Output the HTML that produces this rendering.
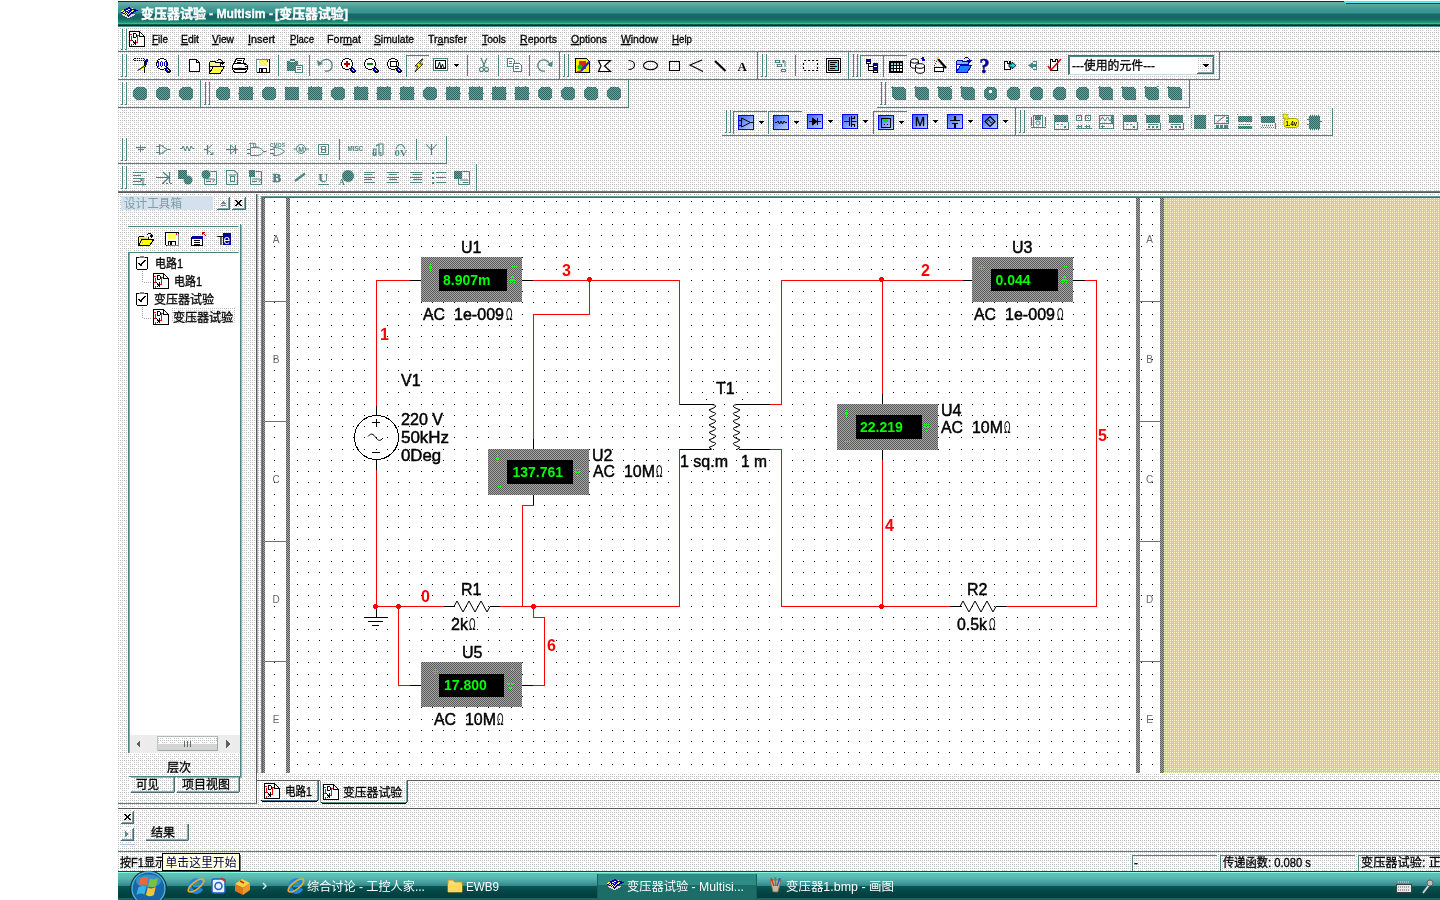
<!DOCTYPE html>
<html><head><meta charset="utf-8"><title>Multisim</title><style>html,body{margin:0;padding:0;background:#fff;overflow:hidden}svg{display:block;will-change:transform}</style></head><body><svg width="1440" height="900" viewBox="0 0 1440 900" shape-rendering="crispEdges" font-family="'Liberation Sans','Noto Sans CJK SC',sans-serif"><defs>
<pattern id="tb" width="8" height="8" patternUnits="userSpaceOnUse"><rect width="8" height="8" fill="#fff"/><path d="M0 0h1v1h-1zM2 0h1v1h-1zM4 0h1v1h-1zM6 0h1v1h-1zM0 2h1v1h-1zM2 2h1v1h-1zM6 2h1v1h-1zM0 4h1v1h-1zM2 4h1v1h-1zM4 4h1v1h-1zM6 4h1v1h-1zM2 6h1v1h-1zM4 6h1v1h-1zM6 6h1v1h-1z" fill="#c0c0c0"/></pattern>
<pattern id="ck" width="2" height="2" patternUnits="userSpaceOnUse"><rect width="2" height="2" fill="#a4a4a4"/><path d="M0 0h1v1h-1zM1 1h1v1h-1z" fill="#5c5c5c"/></pattern>
<pattern id="dots" x="297" y="201" width="45" height="45" patternUnits="userSpaceOnUse"><path d="M0 0h1v1h-1zM11 0h1v1h-1zM22 0h1v1h-1zM34 0h1v1h-1zM0 11h1v1h-1zM11 11h1v1h-1zM22 11h1v1h-1zM34 11h1v1h-1zM0 23h1v1h-1zM11 23h1v1h-1zM22 23h1v1h-1zM34 23h1v1h-1zM0 34h1v1h-1zM11 34h1v1h-1zM22 34h1v1h-1zM34 34h1v1h-1z" fill="#000"/></pattern>
<pattern id="gy" width="4" height="4" patternUnits="userSpaceOnUse"><rect width="4" height="4" fill="#c8c8c8"/><path d="M0 0h1v1h-1zM2 2h1v1h-1zM2 0h1v1h-1z" fill="#ffffc0"/><path d="M0 2h1v1h-1z" fill="#ffc8c8"/></pattern>
<pattern id="hz" width="2" height="2" patternUnits="userSpaceOnUse"><rect width="2" height="2" fill="#6aa09c"/><path d="M0 0h1v1h-1zM1 1h1v1h-1z" fill="#2a6a62"/></pattern>
<linearGradient id="ttl" x1="0" y1="0" x2="0" y2="1">
<stop offset="0" stop-color="#003828"/><stop offset="0.04" stop-color="#003828"/>
<stop offset="0.04" stop-color="#5aa8a0"/><stop offset="0.2" stop-color="#48a094"/>
<stop offset="0.36" stop-color="#3a9a90"/><stop offset="0.46" stop-color="#3a9494"/>
<stop offset="0.47" stop-color="#186c68"/><stop offset="0.8" stop-color="#187068"/>
<stop offset="0.84" stop-color="#1c8070"/><stop offset="0.85" stop-color="#30c090"/><stop offset="0.885" stop-color="#30c090"/>
<stop offset="0.886" stop-color="#085040"/><stop offset="0.96" stop-color="#003030"/><stop offset="0.961" stop-color="#4c8c94"/><stop offset="1" stop-color="#4c8c94"/>
</linearGradient>
<linearGradient id="tsk" x1="0" y1="0" x2="0" y2="1">
<stop offset="0" stop-color="#005040"/><stop offset="0.034" stop-color="#005040"/>
<stop offset="0.035" stop-color="#80ffe0"/><stop offset="0.069" stop-color="#80ffe0"/>
<stop offset="0.07" stop-color="#60c4b8"/><stop offset="0.24" stop-color="#58b8b0"/>
<stop offset="0.38" stop-color="#48a0a0"/><stop offset="0.5" stop-color="#348888"/>
<stop offset="0.51" stop-color="#085858"/><stop offset="0.68" stop-color="#044848"/>
<stop offset="0.93" stop-color="#033c3c"/><stop offset="0.94" stop-color="#106868"/><stop offset="1" stop-color="#106868"/>
</linearGradient>
<linearGradient id="bl" x1="0" y1="0" x2="1" y2="1"><stop offset="0" stop-color="#3060ff"/><stop offset="1" stop-color="#c8d8ff"/></linearGradient>
</defs>
<rect x="0" y="0" width="1440" height="900" fill="#fff"/>
<rect x="118" y="27" width="1322" height="845" fill="url(#tb)"/>
<rect x="118" y="1" width="1322" height="1" fill="#003828"/>
<rect x="118" y="2" width="1322" height="1" fill="#6cacaa"/>
<rect x="118" y="3" width="1322" height="1" fill="#68a8a6"/>
<rect x="118" y="4" width="1322" height="1" fill="#60a8a0"/>
<rect x="118" y="5" width="1322" height="1" fill="#54a49c"/>
<rect x="118" y="6" width="1322" height="1" fill="#4ca298"/>
<rect x="118" y="7" width="1322" height="1" fill="#44a094"/>
<rect x="118" y="8" width="1322" height="1" fill="#409c94"/>
<rect x="118" y="9" width="1322" height="1" fill="#3c9a92"/>
<rect x="118" y="10" width="1322" height="1" fill="#3a9894"/>
<rect x="118" y="11" width="1322" height="1" fill="#3a9696"/>
<rect x="118" y="12" width="1322" height="1" fill="#3a9494"/>
<rect x="118" y="13" width="1322" height="1" fill="#287c7a"/>
<rect x="118" y="14" width="1322" height="1" fill="#186c68"/>
<rect x="118" y="15" width="1322" height="1" fill="#176a66"/>
<rect x="118" y="16" width="1322" height="1" fill="#166866"/>
<rect x="118" y="17" width="1322" height="1" fill="#166866"/>
<rect x="118" y="18" width="1322" height="1" fill="#176a66"/>
<rect x="118" y="19" width="1322" height="1" fill="#187068"/>
<rect x="118" y="20" width="1322" height="1" fill="#1a7c6c"/>
<rect x="118" y="21" width="1322" height="1" fill="#1e8872"/>
<rect x="118" y="22" width="1322" height="1" fill="#249878"/>
<rect x="118" y="23" width="1322" height="1" fill="#30c090"/>
<rect x="118" y="24" width="1322" height="1" fill="#0c6048"/>
<rect x="118" y="25" width="1322" height="1" fill="#003030"/>
<rect x="118" y="26" width="1322" height="1" fill="#4c8c94"/>
<rect x="1344" y="1" width="96" height="1" fill="#70d0e8"/>
<rect x="1345" y="2" width="95" height="1" fill="#50f8ff"/>
<rect x="1346" y="3" width="94" height="1" fill="#003090"/>
<path d="M128 7h2v1h-2zM126 8h5v1h-5zM124 9h4v1h-4zM130 9h6v1h-6zM124 10h2v1h-2zM128 10h4v1h-4zM134 10h4v1h-4zM123 11h1v1h-1zM125 11h3v1h-3zM129 11h2v1h-2zM133 11h3v1h-3zM121 12h2v1h-2zM125 12h1v1h-1zM127 12h3v1h-3zM131 12h3v1h-3zM123 13h2v1h-2zM126 13h1v1h-1zM128 13h1v1h-1zM130 13h3v1h-3zM125 14h1v1h-1zM127 14h1v1h-1zM129 14h2v1h-2zM127 15h3v1h-3zM128 16h1v1h-1z" fill="#0000a0"/>
<path d="M132 8h1v1h-1zM128 9h2v1h-2zM126 10h2v1h-2zM128 11h1v1h-1zM126 12h1v1h-1zM130 12h1v1h-1zM125 13h1v1h-1zM127 13h1v1h-1zM129 13h1v1h-1zM126 14h1v1h-1zM128 14h1v1h-1z" fill="#fff"/>
<path d="M122 10h2v1h-2zM132 10h2v1h-2zM121 11h2v1h-2zM124 11h1v1h-1zM131 11h2v1h-2zM123 12h2v1h-2z" fill="#ffff00"/>
<path d="M122 14h3v1h-3zM131 14h4v1h-4zM123 15h4v1h-4zM130 15h4v1h-4zM125 16h3v1h-3zM129 16h3v1h-3zM127 17h3v1h-3z" fill="#e0d8d8"/>
<text x="141" y="18" font-size="13" fill="#fff" font-weight="bold" textLength="65" lengthAdjust="spacingAndGlyphs" stroke="#fff" stroke-width="0.4">变压器试验</text>
<text x="209" y="18" font-size="13" fill="#fff" font-weight="bold" textLength="64" lengthAdjust="spacingAndGlyphs" stroke="#fff" stroke-width="0.3">- Multisim -</text>
<text x="275" y="18" font-size="13" fill="#fff" font-weight="bold" textLength="73" lengthAdjust="spacingAndGlyphs" stroke="#fff" stroke-width="0.4">[变压器试验]</text>
<rect x="122" y="29" width="1" height="21" fill="#4a8582"/>
<rect x="126" y="29" width="1" height="21" fill="#4a8582"/>
<rect x="121" y="49" width="2" height="1" fill="#4a8582"/>
<rect x="125" y="49" width="2" height="1" fill="#4a8582"/>
<rect x="118" y="51" width="1322" height="1" fill="#4a8582"/>
<path d="M129 31h11v1h-11zM129 32h1v1h-1zM139 32h2v1h-2zM129 33h1v1h-1zM133 33h3v1h-3zM139 33h1v1h-1zM141 33h1v1h-1zM129 34h1v1h-1zM133 34h1v1h-1zM136 34h1v1h-1zM139 34h1v1h-1zM142 34h1v1h-1zM129 35h1v1h-1zM133 35h1v1h-1zM136 35h1v1h-1zM139 35h1v1h-1zM143 35h1v1h-1zM129 36h1v1h-1zM133 36h1v1h-1zM136 36h1v1h-1zM139 36h6v1h-6zM129 37h1v1h-1zM133 37h3v1h-3zM144 37h1v1h-1zM129 38h1v1h-1zM144 38h1v1h-1zM129 39h1v1h-1zM144 39h1v1h-1zM129 40h1v1h-1zM132 40h1v1h-1zM135 40h1v1h-1zM144 40h1v1h-1zM129 41h1v1h-1zM133 41h1v1h-1zM135 41h1v1h-1zM144 41h1v1h-1zM129 42h1v1h-1zM133 42h3v1h-3zM144 42h1v1h-1zM129 43h1v1h-1zM134 43h2v1h-2zM144 43h1v1h-1zM129 44h1v1h-1zM133 44h1v1h-1zM135 44h1v1h-1zM144 44h1v1h-1zM129 45h1v1h-1zM144 45h1v1h-1zM129 46h16v1h-16z" fill="#000"/>
<path d="M130 32h9v1h-9zM130 33h3v1h-3zM136 33h3v1h-3zM140 33h1v1h-1zM132 34h1v1h-1zM134 34h2v1h-2zM137 34h2v1h-2zM140 34h2v1h-2zM130 35h3v1h-3zM134 35h2v1h-2zM140 35h3v1h-3zM130 36h1v1h-1zM132 36h1v1h-1zM134 36h2v1h-2zM138 36h1v1h-1zM130 37h1v1h-1zM132 37h1v1h-1zM136 37h1v1h-1zM138 37h6v1h-6zM130 38h1v1h-1zM132 38h5v1h-5zM138 38h6v1h-6zM130 39h1v1h-1zM132 39h5v1h-5zM138 39h6v1h-6zM133 40h2v1h-2zM136 40h1v1h-1zM138 40h6v1h-6zM130 41h3v1h-3zM134 41h1v1h-1zM136 41h1v1h-1zM138 41h6v1h-6zM130 42h3v1h-3zM138 42h6v1h-6zM130 43h4v1h-4zM136 43h8v1h-8zM130 44h1v1h-1zM132 44h1v1h-1zM134 44h1v1h-1zM136 44h8v1h-8zM130 45h1v1h-1zM132 45h12v1h-12z" fill="#fff"/>
<path d="M130 34h2v1h-2zM137 35h2v1h-2zM131 36h1v1h-1zM137 36h1v1h-1zM131 37h1v1h-1zM137 37h1v1h-1zM131 38h1v1h-1zM137 38h1v1h-1zM131 39h1v1h-1zM137 39h1v1h-1zM130 40h2v1h-2zM137 40h1v1h-1zM137 41h1v1h-1zM136 42h2v1h-2zM131 44h1v1h-1zM131 45h1v1h-1z" fill="#ff0000"/>
<text x="152" y="43" font-size="11" fill="#000" textLength="16" lengthAdjust="spacingAndGlyphs" stroke="#000" stroke-width="0.3"><tspan text-decoration="underline">F</tspan>ile</text>
<text x="181" y="43" font-size="11" fill="#000" textLength="18" lengthAdjust="spacingAndGlyphs" stroke="#000" stroke-width="0.3"><tspan text-decoration="underline">E</tspan>dit</text>
<text x="212" y="43" font-size="11" fill="#000" textLength="22" lengthAdjust="spacingAndGlyphs" stroke="#000" stroke-width="0.3"><tspan text-decoration="underline">V</tspan>iew</text>
<text x="248" y="43" font-size="11" fill="#000" textLength="27" lengthAdjust="spacingAndGlyphs" stroke="#000" stroke-width="0.3"><tspan text-decoration="underline">I</tspan>nsert</text>
<text x="290" y="43" font-size="11" fill="#000" textLength="24" lengthAdjust="spacingAndGlyphs" stroke="#000" stroke-width="0.3"><tspan text-decoration="underline">P</tspan>lace</text>
<text x="327" y="43" font-size="11" fill="#000" textLength="34" lengthAdjust="spacingAndGlyphs" stroke="#000" stroke-width="0.3">For<tspan text-decoration="underline">m</tspan>at</text>
<text x="374" y="43" font-size="11" fill="#000" textLength="40" lengthAdjust="spacingAndGlyphs" stroke="#000" stroke-width="0.3"><tspan text-decoration="underline">S</tspan>imulate</text>
<text x="428" y="43" font-size="11" fill="#000" textLength="39" lengthAdjust="spacingAndGlyphs" stroke="#000" stroke-width="0.3">Tr<tspan text-decoration="underline">a</tspan>nsfer</text>
<text x="482" y="43" font-size="11" fill="#000" textLength="24" lengthAdjust="spacingAndGlyphs" stroke="#000" stroke-width="0.3"><tspan text-decoration="underline">T</tspan>ools</text>
<text x="520" y="43" font-size="11" fill="#000" textLength="37" lengthAdjust="spacingAndGlyphs" stroke="#000" stroke-width="0.3"><tspan text-decoration="underline">R</tspan>eports</text>
<text x="571" y="43" font-size="11" fill="#000" textLength="36" lengthAdjust="spacingAndGlyphs" stroke="#000" stroke-width="0.3"><tspan text-decoration="underline">O</tspan>ptions</text>
<text x="621" y="43" font-size="11" fill="#000" textLength="37" lengthAdjust="spacingAndGlyphs" stroke="#000" stroke-width="0.3"><tspan text-decoration="underline">W</tspan>indow</text>
<text x="672" y="43" font-size="11" fill="#000" textLength="20" lengthAdjust="spacingAndGlyphs" stroke="#000" stroke-width="0.3"><tspan text-decoration="underline">H</tspan>elp</text>
<rect x="118" y="79" width="1102" height="1" fill="#4a8582"/>
<rect x="118" y="107" width="511" height="1" fill="#4a8582"/>
<rect x="877" y="107" width="313" height="1" fill="#4a8582"/>
<rect x="722" y="135" width="611" height="1" fill="#4a8582"/>
<rect x="118" y="163" width="329" height="1" fill="#4a8582"/>
<rect x="118" y="191" width="1322" height="1" fill="#4a8582"/>
<rect x="118" y="192" width="1322" height="1" fill="#585858"/>
<rect x="122" y="54" width="1" height="23" fill="#4a8582"/>
<rect x="126" y="54" width="1" height="23" fill="#4a8582"/>
<rect x="121" y="76" width="2" height="1" fill="#4a8582"/>
<rect x="125" y="76" width="2" height="1" fill="#4a8582"/>
<rect x="559" y="52" width="1" height="27" fill="#4a8582"/>
<rect x="564" y="54" width="1" height="23" fill="#4a8582"/>
<rect x="568" y="54" width="1" height="23" fill="#4a8582"/>
<rect x="563" y="76" width="2" height="1" fill="#4a8582"/>
<rect x="567" y="76" width="2" height="1" fill="#4a8582"/>
<rect x="757" y="52" width="1" height="27" fill="#4a8582"/>
<rect x="762" y="54" width="1" height="23" fill="#4a8582"/>
<rect x="766" y="54" width="1" height="23" fill="#4a8582"/>
<rect x="761" y="76" width="2" height="1" fill="#4a8582"/>
<rect x="765" y="76" width="2" height="1" fill="#4a8582"/>
<rect x="848" y="52" width="1" height="27" fill="#4a8582"/>
<rect x="853" y="54" width="1" height="23" fill="#4a8582"/>
<rect x="857" y="54" width="1" height="23" fill="#4a8582"/>
<rect x="852" y="76" width="2" height="1" fill="#4a8582"/>
<rect x="856" y="76" width="2" height="1" fill="#4a8582"/>
<rect x="1219" y="52" width="1" height="28" fill="#4a8582"/>
<rect x="178" y="55" width="1" height="21" fill="#4a8582"/>
<rect x="278" y="55" width="1" height="21" fill="#4a8582"/>
<rect x="309" y="55" width="1" height="21" fill="#4a8582"/>
<rect x="467" y="55" width="1" height="21" fill="#4a8582"/>
<rect x="498" y="55" width="1" height="21" fill="#4a8582"/>
<rect x="529" y="55" width="1" height="21" fill="#4a8582"/>
<rect x="795" y="55" width="1" height="21" fill="#4a8582"/>
<rect x="122" y="82" width="1" height="23" fill="#4a8582"/>
<rect x="126" y="82" width="1" height="23" fill="#4a8582"/>
<rect x="121" y="104" width="2" height="1" fill="#4a8582"/>
<rect x="125" y="104" width="2" height="1" fill="#4a8582"/>
<rect x="200" y="80" width="1" height="27" fill="#4a8582"/>
<rect x="205" y="82" width="1" height="23" fill="#4a8582"/>
<rect x="209" y="82" width="1" height="23" fill="#4a8582"/>
<rect x="204" y="104" width="2" height="1" fill="#4a8582"/>
<rect x="208" y="104" width="2" height="1" fill="#4a8582"/>
<rect x="628" y="80" width="1" height="28" fill="#4a8582"/>
<rect x="881" y="82" width="1" height="23" fill="#4a8582"/>
<rect x="885" y="82" width="1" height="23" fill="#4a8582"/>
<rect x="880" y="104" width="2" height="1" fill="#4a8582"/>
<rect x="884" y="104" width="2" height="1" fill="#4a8582"/>
<rect x="1189" y="80" width="1" height="28" fill="#4a8582"/>
<rect x="726" y="110" width="1" height="23" fill="#4a8582"/>
<rect x="730" y="110" width="1" height="23" fill="#4a8582"/>
<rect x="725" y="132" width="2" height="1" fill="#4a8582"/>
<rect x="729" y="132" width="2" height="1" fill="#4a8582"/>
<rect x="1015" y="108" width="1" height="27" fill="#4a8582"/>
<rect x="1020" y="110" width="1" height="23" fill="#4a8582"/>
<rect x="1024" y="110" width="1" height="23" fill="#4a8582"/>
<rect x="1019" y="132" width="2" height="1" fill="#4a8582"/>
<rect x="1023" y="132" width="2" height="1" fill="#4a8582"/>
<rect x="1332" y="108" width="1" height="28" fill="#4a8582"/>
<rect x="122" y="138" width="1" height="23" fill="#4a8582"/>
<rect x="126" y="138" width="1" height="23" fill="#4a8582"/>
<rect x="121" y="160" width="2" height="1" fill="#4a8582"/>
<rect x="125" y="160" width="2" height="1" fill="#4a8582"/>
<rect x="446" y="136" width="1" height="28" fill="#4a8582"/>
<rect x="339" y="139" width="1" height="21" fill="#4a8582"/>
<rect x="416" y="139" width="1" height="21" fill="#4a8582"/>
<rect x="122" y="166" width="1" height="23" fill="#4a8582"/>
<rect x="126" y="166" width="1" height="23" fill="#4a8582"/>
<rect x="121" y="188" width="2" height="1" fill="#4a8582"/>
<rect x="125" y="188" width="2" height="1" fill="#4a8582"/>
<rect x="476" y="164" width="1" height="28" fill="#4a8582"/>
<rect x="406" y="55" width="23" height="1" fill="#4a8582"/>
<rect x="406" y="55" width="1" height="22" fill="#4a8582"/>
<rect x="860" y="55" width="23" height="1" fill="#4a8582"/>
<rect x="860" y="55" width="1" height="22" fill="#4a8582"/>
<rect x="883" y="55" width="24" height="1" fill="#4a8582"/>
<rect x="883" y="55" width="1" height="22" fill="#4a8582"/>
<rect x="733" y="111" width="34" height="1" fill="#4a8582"/>
<rect x="733" y="111" width="1" height="23" fill="#4a8582"/>
<rect x="768" y="111" width="34" height="1" fill="#4a8582"/>
<rect x="768" y="111" width="1" height="23" fill="#4a8582"/>
<rect x="873" y="111" width="34" height="1" fill="#4a8582"/>
<rect x="873" y="111" width="1" height="23" fill="#4a8582"/>
<path d="M136 87h8l3 3v7l-3 3h-8l-3 -3v-7z" fill="url(#hz)"/>
<path d="M159 87h8l3 3v7l-3 3h-8l-3 -3v-7z" fill="url(#hz)"/>
<path d="M182 87h8l3 3v7l-3 3h-8l-3 -3v-7z" fill="url(#hz)"/>
<path d="M219 87h8l3 3v7l-3 3h-8l-3 -3v-7z" fill="url(#hz)"/>
<path d="M239 87h14v13h-14z" fill="url(#hz)"/>
<path d="M238 93h1v1h-1zM253 93h1v1h-1zM242 86h1v1h-1zM249 86h1v1h-1z" fill="#4a8582"/>
<path d="M265 87h8l3 3v7l-3 3h-8l-3 -3v-7z" fill="url(#hz)"/>
<rect x="285" y="87" width="14" height="13" fill="url(#hz)"/>
<path d="M308 87h14v13h-14z" fill="url(#hz)"/>
<path d="M307 93h1v1h-1zM322 93h1v1h-1zM311 86h1v1h-1zM318 86h1v1h-1z" fill="#4a8582"/>
<path d="M334 87h8l3 3v7l-3 3h-8l-3 -3v-7z" fill="url(#hz)"/>
<path d="M354 87h14v13h-14z" fill="url(#hz)"/>
<path d="M353 93h1v1h-1zM368 93h1v1h-1zM357 86h1v1h-1zM364 86h1v1h-1z" fill="#4a8582"/>
<path d="M377 87h14v13h-14z" fill="url(#hz)"/>
<path d="M376 93h1v1h-1zM391 93h1v1h-1zM380 86h1v1h-1zM387 86h1v1h-1z" fill="#4a8582"/>
<path d="M400 87h14v13h-14z" fill="url(#hz)"/>
<path d="M399 93h1v1h-1zM414 93h1v1h-1zM403 86h1v1h-1zM410 86h1v1h-1z" fill="#4a8582"/>
<path d="M426 87h8l3 3v7l-3 3h-8l-3 -3v-7z" fill="url(#hz)"/>
<path d="M446 87h14v13h-14z" fill="url(#hz)"/>
<path d="M445 93h1v1h-1zM460 93h1v1h-1zM449 86h1v1h-1zM456 86h1v1h-1z" fill="#4a8582"/>
<path d="M469 87h14v13h-14z" fill="url(#hz)"/>
<path d="M468 93h1v1h-1zM483 93h1v1h-1zM472 86h1v1h-1zM479 86h1v1h-1z" fill="#4a8582"/>
<path d="M492 87h14v13h-14z" fill="url(#hz)"/>
<path d="M491 93h1v1h-1zM506 93h1v1h-1zM495 86h1v1h-1zM502 86h1v1h-1z" fill="#4a8582"/>
<path d="M515 87h14v13h-14z" fill="url(#hz)"/>
<path d="M514 93h1v1h-1zM529 93h1v1h-1zM518 86h1v1h-1zM525 86h1v1h-1z" fill="#4a8582"/>
<path d="M541 87h8l3 3v7l-3 3h-8l-3 -3v-7z" fill="url(#hz)"/>
<path d="M564 87h8l3 3v7l-3 3h-8l-3 -3v-7z" fill="url(#hz)"/>
<path d="M587 87h8l3 3v7l-3 3h-8l-3 -3v-7z" fill="url(#hz)"/>
<path d="M610 87h8l3 3v7l-3 3h-8l-3 -3v-7z" fill="url(#hz)"/>
<path d="M892 87h11l3 3v8l-2 2h-9l-3 -3z" fill="url(#hz)"/>
<path d="M891 86h2v2h-2z" fill="#4a8582"/>
<path d="M891 86h1v1h-1z" fill="#fff"/>
<path d="M904 99h2v1h-2zM905 98h1v1h-1z" fill="#4a8582"/>
<path d="M915 87h11l3 3v8l-2 2h-9l-3 -3z" fill="url(#hz)"/>
<path d="M914 86h2v2h-2z" fill="#4a8582"/>
<path d="M914 86h1v1h-1z" fill="#fff"/>
<path d="M927 99h2v1h-2zM928 98h1v1h-1z" fill="#4a8582"/>
<path d="M938 87h11l3 3v8l-2 2h-9l-3 -3z" fill="url(#hz)"/>
<path d="M937 86h2v2h-2z" fill="#4a8582"/>
<path d="M937 86h1v1h-1z" fill="#fff"/>
<path d="M950 86h2v1h-2z" fill="#4a8582"/>
<path d="M961 87h11l3 3v8l-2 2h-9l-3 -3z" fill="url(#hz)"/>
<path d="M960 86h2v2h-2z" fill="#4a8582"/>
<path d="M960 86h1v1h-1z" fill="#fff"/>
<path d="M973 99h2v1h-2zM974 98h1v1h-1z" fill="#4a8582"/>
<path d="M987 87h7l3 3v7l-3 3h-7l-3 -3v-7z" fill="url(#hz)"/>
<path d="M989 90h3v3h-3z" fill="#fff"/>
<path d="M1010 87h7l3 3v7l-3 3h-7l-3 -3v-7z" fill="url(#hz)"/>
<path d="M1033 87h7l3 3v7l-3 3h-7l-3 -3v-7z" fill="url(#hz)"/>
<path d="M1056 87h7l3 3v7l-3 3h-7l-3 -3v-7z" fill="url(#hz)"/>
<path d="M1079 87h7l3 3v7l-3 3h-7l-3 -3v-7z" fill="url(#hz)"/>
<path d="M1099 87h11l3 3v8l-2 2h-9l-3 -3z" fill="url(#hz)"/>
<path d="M1098 86h2v2h-2z" fill="#4a8582"/>
<path d="M1098 86h1v1h-1z" fill="#fff"/>
<path d="M1111 99h2v1h-2zM1112 98h1v1h-1z" fill="#4a8582"/>
<path d="M1122 87h11l3 3v8l-2 2h-9l-3 -3z" fill="url(#hz)"/>
<path d="M1121 86h2v2h-2z" fill="#4a8582"/>
<path d="M1121 86h1v1h-1z" fill="#fff"/>
<path d="M1134 99h2v1h-2zM1135 98h1v1h-1z" fill="#4a8582"/>
<path d="M1145 87h11l3 3v8l-2 2h-9l-3 -3z" fill="url(#hz)"/>
<path d="M1144 86h2v2h-2z" fill="#4a8582"/>
<path d="M1144 86h1v1h-1z" fill="#fff"/>
<path d="M1157 86h2v1h-2z" fill="#4a8582"/>
<path d="M1168 87h11l3 3v8l-2 2h-9l-3 -3z" fill="url(#hz)"/>
<path d="M1167 86h2v2h-2z" fill="#4a8582"/>
<path d="M1167 86h1v1h-1z" fill="#fff"/>
<path d="M1180 99h2v1h-2zM1181 98h1v1h-1z" fill="#4a8582"/>
<path d="M135 58h1v1h-1zM137 58h1v1h-1zM139 58h1v1h-1zM141 58h1v1h-1zM143 58h1v1h-1zM135 60h1v1h-1zM137 60h1v1h-1zM139 60h1v1h-1zM141 60h1v1h-1zM143 60h1v1h-1zM133 59h1v1h-1zM134 58h1v1h-1zM134 60h1v1h-1zM144 59h1v1h-1zM145 60h1v1h-1z" fill="#000"/>
<rect x="144" y="61" width="1" height="12" fill="#000"/>
<path d="M145 61h1v6h-1z" fill="#000"/>
<path d="M146 59l2 0l-1 6l-2 1z" fill="#0000c0"/>
<path d="M138 70l6 -5l1 2l-5 3.500z" fill="#e8e000"/>
<path d="M137.500 70.500l7 -4.500" fill="none" stroke="#000" stroke-width="1" shape-rendering="geometricPrecision"/>
<path d="M160 58h4v1h-4zM158 59h2v1h-2zM164 59h2v1h-2zM157 60h1v1h-1zM166 60h1v1h-1zM157 61h1v1h-1zM166 61h1v1h-1zM156 62h1v1h-1zM167 62h1v1h-1zM156 63h1v1h-1zM167 63h1v1h-1zM156 64h1v1h-1zM167 64h1v1h-1zM156 65h1v1h-1zM167 65h1v1h-1zM157 66h1v1h-1zM166 66h1v1h-1zM157 67h1v1h-1zM166 67h2v1h-2zM158 68h2v1h-2zM164 68h2v1h-2zM168 68h1v1h-1zM160 69h4v1h-4zM165 69h1v1h-1zM169 69h1v1h-1zM165 70h1v1h-1zM170 70h1v1h-1zM166 71h1v1h-1zM170 71h1v1h-1zM167 72h3v1h-3z" fill="#000"/>
<path d="M160 59h4v1h-4zM158 60h8v1h-8zM158 61h8v1h-8zM157 62h10v1h-10zM157 63h10v1h-10zM157 64h10v1h-10zM157 65h10v1h-10zM158 66h8v1h-8zM158 67h8v1h-8zM160 68h4v1h-4zM167 69h1v1h-1zM168 70h1v1h-1z" fill="#fff"/>
<path d="M166 68h2v1h-2zM166 69h1v1h-1zM168 69h1v1h-1zM166 70h2v1h-2zM169 70h1v1h-1zM167 71h3v1h-3z" fill="#0000c0"/>
<path d="M158 61h1v6h-1zM157 62h1v1h-1zM160 62h1v4h-1zM162 62h1v4h-1zM161 61h1v1h-1zM161 66h1v1h-1zM164 62h1v4h-1zM166 62h1v4h-1zM165 61h1v1h-1zM165 66h1v1h-1z" fill="#0000c0"/>
<path d="M189.500 59.500h7l3 3v9h-10z" fill="#fff" stroke="#000" stroke-width="1"/>
<path d="M196.500 59.500v3h3" fill="none" stroke="#000" stroke-width="1"/>
<path d="M209.5 62.5l2 -1.500h3l1.500 1.500h4v4h-10.500z" fill="#f8f880" stroke="#000" stroke-width="1"/>
<path d="M209.5 62.5v10.500h11l4 -6.500h-11l-4 6.500" fill="#ffff40" stroke="#000" stroke-width="1"/>
<path d="M217 60h1v1h-1zM218 59h3v1h-3zM221 60h1v1h-1zM222 61h1v2h-1zM220 62h5v1h-5zM221 63h3v1h-3zM222 64h1v1h-1z" fill="#000"/>
<path d="M236.500 58.500h8l-1.500 5h-9z" fill="#fff" stroke="#000" stroke-width="1"/>
<path d="M237 60h5v1h-5zM237 62h4v1h-4z" fill="#000"/>
<path d="M232.500 65.500l2 -2h11l2 2v4l-2 2.500h-11l-2 -2.500z" fill="#fff" stroke="#000" stroke-width="1"/>
<rect x="233" y="68" width="14" height="1" fill="#000"/>
<rect x="234" y="69" width="12" height="1" fill="#000"/>
<path d="M238 67h4v1h-4z" fill="#e8e000"/>
<path d="M244 64h2v1h-2zM245 66h2v1h-2z" fill="#000"/>
<path d="M256.5 59.5h13v13h-12l-1 -1z" fill="#fff" stroke="#5c8c8c" stroke-width="1"/>
<rect x="269" y="59" width="1" height="14" fill="#000"/>
<rect x="257" y="72" width="13" height="1" fill="#000"/>
<rect x="259" y="60" width="8" height="6" fill="#f8f060"/>
<path d="M260 61h1v1h-1zM261 62h1v1h-1zM262 63h1v1h-1zM263 64h1v1h-1zM263 60h1v1h-1zM264 61h1v1h-1zM265 62h1v1h-1zM266 63h1v1h-1zM259 63h1v1h-1zM260 64h1v1h-1z" fill="#fff"/>
<path d="M267 60h1v2h-1z" fill="#ff0000"/>
<path d="M259 68h8v1h-8zM259 68h1v4h-1zM266 68h1v4h-1zM261 69h2v3h-2z" fill="#000"/>
<path d="M287 61h3v-2h5v2h3v10h-11z" fill="url(#hz)"/>
<path d="M295 65h7v7h-7z" fill="#fff" stroke="#4a8582" stroke-width="1"/>
<path d="M297 67h4v1h-4zM297 69h4v1h-4z" fill="#4a8582"/>
<path d="M290 61h5v1h-5z" fill="#fff"/>
<path d="M320.500 63c3 -5 10 -5 11.500 1c1 5 -3 8 -7 7" fill="none" stroke="#4a8582" stroke-width="1.3" shape-rendering="geometricPrecision"/>
<path d="M317 60l1 6l5 -2z" fill="#4a8582" shape-rendering="geometricPrecision"/>
<path d="M345 58h4v1h-4zM343 59h2v1h-2zM349 59h2v1h-2zM342 60h1v1h-1zM351 60h1v1h-1zM342 61h1v1h-1zM351 61h1v1h-1zM341 62h1v1h-1zM352 62h1v1h-1zM341 63h1v1h-1zM352 63h1v1h-1zM341 64h1v1h-1zM352 64h1v1h-1zM341 65h1v1h-1zM352 65h1v1h-1zM342 66h1v1h-1zM351 66h1v1h-1zM342 67h1v1h-1zM351 67h2v1h-2zM343 68h2v1h-2zM349 68h2v1h-2zM353 68h1v1h-1zM345 69h4v1h-4zM350 69h1v1h-1zM354 69h1v1h-1zM350 70h1v1h-1zM355 70h1v1h-1zM351 71h1v1h-1zM355 71h1v1h-1zM352 72h3v1h-3z" fill="#000"/>
<path d="M345 59h4v1h-4zM343 60h8v1h-8zM343 61h8v1h-8zM342 62h10v1h-10zM342 63h10v1h-10zM342 64h10v1h-10zM342 65h10v1h-10zM343 66h8v1h-8zM343 67h8v1h-8zM345 68h4v1h-4zM352 69h1v1h-1zM353 70h1v1h-1z" fill="#fff"/>
<path d="M351 68h2v1h-2zM351 69h1v1h-1zM353 69h1v1h-1zM351 70h2v1h-2zM354 70h1v1h-1zM352 71h3v1h-3z" fill="#0000c0"/>
<path d="M346 61h2v6h-2zM344 63h6v2h-6z" fill="#a00000"/>
<path d="M368 58h4v1h-4zM366 59h2v1h-2zM372 59h2v1h-2zM365 60h1v1h-1zM374 60h1v1h-1zM365 61h1v1h-1zM374 61h1v1h-1zM364 62h1v1h-1zM375 62h1v1h-1zM364 63h1v1h-1zM375 63h1v1h-1zM364 64h1v1h-1zM375 64h1v1h-1zM364 65h1v1h-1zM375 65h1v1h-1zM365 66h1v1h-1zM374 66h1v1h-1zM365 67h1v1h-1zM374 67h2v1h-2zM366 68h2v1h-2zM372 68h2v1h-2zM376 68h1v1h-1zM368 69h4v1h-4zM373 69h1v1h-1zM377 69h1v1h-1zM373 70h1v1h-1zM378 70h1v1h-1zM374 71h1v1h-1zM378 71h1v1h-1zM375 72h3v1h-3z" fill="#000"/>
<path d="M368 59h4v1h-4zM366 60h8v1h-8zM366 61h8v1h-8zM365 62h10v1h-10zM365 63h10v1h-10zM365 64h10v1h-10zM365 65h10v1h-10zM366 66h8v1h-8zM366 67h8v1h-8zM368 68h4v1h-4zM375 69h1v1h-1zM376 70h1v1h-1z" fill="#fff"/>
<path d="M374 68h2v1h-2zM374 69h1v1h-1zM376 69h1v1h-1zM374 70h2v1h-2zM377 70h1v1h-1zM375 71h3v1h-3z" fill="#0000c0"/>
<path d="M367 63h6v2h-6z" fill="#008000"/>
<path d="M391 58h4v1h-4zM389 59h2v1h-2zM395 59h2v1h-2zM388 60h1v1h-1zM397 60h1v1h-1zM388 61h1v1h-1zM397 61h1v1h-1zM387 62h1v1h-1zM398 62h1v1h-1zM387 63h1v1h-1zM398 63h1v1h-1zM387 64h1v1h-1zM398 64h1v1h-1zM387 65h1v1h-1zM398 65h1v1h-1zM388 66h1v1h-1zM397 66h1v1h-1zM388 67h1v1h-1zM397 67h2v1h-2zM389 68h2v1h-2zM395 68h2v1h-2zM399 68h1v1h-1zM391 69h4v1h-4zM396 69h1v1h-1zM400 69h1v1h-1zM396 70h1v1h-1zM401 70h1v1h-1zM397 71h1v1h-1zM401 71h1v1h-1zM398 72h3v1h-3z" fill="#000"/>
<path d="M391 59h4v1h-4zM389 60h8v1h-8zM389 61h8v1h-8zM388 62h10v1h-10zM388 63h10v1h-10zM388 64h10v1h-10zM388 65h10v1h-10zM389 66h8v1h-8zM389 67h8v1h-8zM391 68h4v1h-4zM398 69h1v1h-1zM399 70h1v1h-1z" fill="#fff"/>
<path d="M397 68h2v1h-2zM397 69h1v1h-1zM399 69h1v1h-1zM397 70h2v1h-2zM400 70h1v1h-1zM398 71h3v1h-3z" fill="#0000c0"/>
<path d="M390.500 61.500h6v5h-6z" fill="none" stroke="#000" stroke-width="1.2"/>
<path d="M422 59l-7 7h3l-3 6l8 -8h-3.500l3.500 -5z" fill="#f8f000" stroke="#000" stroke-width="0.8" shape-rendering="geometricPrecision"/>
<path d="M433.500 58.500h14v12h-14z" fill="#fff" stroke="#4a8582" stroke-width="1"/>
<path d="M435.500 60.500h10v8h-10z" fill="none" stroke="#000" stroke-width="1"/>
<path d="M436 68l2 -1l1.500 -5l1.500 6l1.500 -4l1 3.500l1.500 .5" fill="none" stroke="#000" stroke-width="1" shape-rendering="geometricPrecision"/>
<path d="M454 64h5v1h-5zM455 65h3v1h-3zM456 66h1v1h-1z" fill="#000"/>
<path d="M481 58l4 9M487 58l-4 9" fill="none" stroke="#4a8582" stroke-width="1.2" shape-rendering="geometricPrecision"/>
<circle cx="481.5" cy="69.5" r="2" fill="none" stroke="#4a8582" stroke-width="1.100" shape-rendering="geometricPrecision"/><circle cx="486.500" cy="69.500" r="2" fill="none" stroke="#4a8582" stroke-width="1.100" shape-rendering="geometricPrecision"/>
<path d="M507.500 58.500h5l2 2v6h-7z" fill="#fff" stroke="#4a8582" stroke-width="1"/>
<path d="M513.500 63.500h6l2 2v6h-8z" fill="#fff" stroke="#4a8582" stroke-width="1"/>
<path d="M509 61h3v1h-3zM509 63h3v1h-3zM515 66h4v1h-4zM515 68h4v1h-4z" fill="#4a8582"/>
<path d="M549.500 64c-3 -6 -10 -5 -11.500 0c-1 5 3 8 7 7" fill="none" stroke="#4a8582" stroke-width="1.3" shape-rendering="geometricPrecision"/>
<path d="M553 61l-1 6l-5 -2z" fill="#4a8582" shape-rendering="geometricPrecision"/>
<path d="M575.500 58.500h11l3 3v11h-14z" fill="#f8f000" stroke="#000" stroke-width="1"/>
<rect x="579" y="61" width="7" height="8" fill="#e02020"/>
<circle cx="580" cy="67" r="2.500" fill="#00c000" shape-rendering="geometricPrecision"/>
<path d="M581 71l8 -9" fill="none" stroke="#2020e0" stroke-width="2" shape-rendering="geometricPrecision"/>
<path d="M577 72l4 -1" fill="none" stroke="#e02020" stroke-width="1.5" shape-rendering="geometricPrecision"/>
<path d="M598.500 60.500h12l-6 5.500l6 5.500h-12l2.500 -5.500z" fill="#fff" stroke="#000" stroke-width="1.2" shape-rendering="geometricPrecision"/>
<path d="M628.500 60.500c8 0 8 9 0 9" fill="none" stroke="#000" stroke-width="1.1" shape-rendering="geometricPrecision"/>
<ellipse cx="650.500" cy="65.500" rx="7" ry="4.200" fill="none" stroke="#000" stroke-width="1.100" shape-rendering="geometricPrecision"/>
<path d="M669.500 61.500h10v9h-10z" fill="none" stroke="#000" stroke-width="1"/>
<path d="M702 60l-12 5l13 6.500" fill="none" stroke="#000" stroke-width="1.1" shape-rendering="geometricPrecision"/>
<path d="M715 61l10.500 10" fill="none" stroke="#000" stroke-width="2" shape-rendering="geometricPrecision"/>
<text x="737.5" y="71" font-size="13" fill="#000" font-weight="bold" font-family="'Liberation Serif',serif">A</text>
<path d="M775.500 60.500h4v2h-4zM777.500 64.500h4v2h-4zM781.500 69.500h4v2h-4z" fill="#fff" stroke="#4a8582" stroke-width="1"/>
<path d="M782 61h3v6" fill="none" stroke="#4a8582" stroke-width="1" shape-rendering="geometricPrecision"/>
<path d="M783 60h1v3h-1z" fill="#4a8582"/>
<rect x="795" y="55" width="1" height="21" fill="#4a8582"/>
<path d="M803.500 60.500h14v10h-14z" fill="none" stroke="#000" stroke-width="1.4" stroke-dasharray="2 2"/>
<path d="M826.500 58.500h14v14h-14z" fill="#fff" stroke="#000" stroke-width="1"/>
<path d="M828.500 60.500h10v10h-10z" fill="#40e0e0" stroke="#000" stroke-width="1"/>
<path d="M830 62h7v1h-7zM830 64h5v1h-5zM830 66h7v1h-7zM830 68h5v1h-5z" fill="#000"/>
<rect x="866" y="59" width="5" height="2" fill="#0000a0"/>
<path d="M866.5 61.5h4v2h-4z" fill="#fff" stroke="#000" stroke-width="1"/>
<rect x="873" y="63" width="5" height="2" fill="#0000a0"/>
<path d="M873.5 65.5h4v2h-4z" fill="#fff" stroke="#000" stroke-width="1"/>
<rect x="873" y="68" width="5" height="2" fill="#0000a0"/>
<path d="M873.5 70.5h4v2h-4z" fill="#fff" stroke="#000" stroke-width="1"/>
<path d="M868 64h1v7h-1zM868 66h5v1h-5zM868 70h5v1h-5z" fill="#000"/>
<rect x="889" y="61" width="14" height="12" fill="#000"/>
<rect x="891" y="63" width="2" height="2" fill="#90d0e0"/>
<rect x="891" y="66" width="2" height="2" fill="#90d0e0"/>
<rect x="891" y="69" width="2" height="2" fill="#90d0e0"/>
<rect x="894" y="63" width="2" height="2" fill="#90d0e0"/>
<rect x="894" y="66" width="2" height="2" fill="#fff"/>
<rect x="894" y="69" width="2" height="2" fill="#fff"/>
<rect x="897" y="63" width="2" height="2" fill="#90d0e0"/>
<rect x="897" y="66" width="2" height="2" fill="#fff"/>
<rect x="897" y="69" width="2" height="2" fill="#fff"/>
<rect x="900" y="63" width="2" height="2" fill="#90d0e0"/>
<rect x="900" y="66" width="2" height="2" fill="#fff"/>
<rect x="900" y="69" width="2" height="2" fill="#fff"/>
<g shape-rendering="geometricPrecision" fill="#fff" stroke="#000" stroke-width="1"><path d="M910.500 61v5c0 3 8 3 8 0v-5"/><ellipse cx="914.500" cy="61" rx="4" ry="2.200"/><path d="M915.500 66v5c0 3 9 3 9 0v-5"/><ellipse cx="920" cy="66" rx="4.500" ry="2.300"/></g>
<path d="M921 58l3 -1.500v5z" fill="#0000c0"/>
<path d="M922 59h3v2h-3z" fill="#0000c0"/>
<path d="M938 59l8 9" fill="none" stroke="#000" stroke-width="2.2" shape-rendering="geometricPrecision"/>
<path d="M934.500 67.500h9v4h-9z" fill="#fff" stroke="#000" stroke-width="1"/>
<path d="M934 60h1v1h-1zM935 63h1v1h-1zM936 61h1v1h-1zM934 65h1v1h-1zM937 58h1v1h-1z" fill="#c00000"/>
<path d="M937 57h2v2h-2z" fill="#e8e000"/>
<path d="M956.500 61.500l2 -1.500h3l1.500 1.500h5v3h-11.500z" fill="#80b0ff" stroke="#0000c0" stroke-width="1"/>
<path d="M956.500 61.500v10.500h11l4 -6.500h-11l-4 6.500" fill="#2080ff" stroke="#0000c0" stroke-width="1"/>
<path d="M964 58h1v1h-1zM965 57h3v1h-3zM968 58h1v1h-1zM969 59h1v2h-1zM967 60h5v1h-5zM968 61h3v1h-3zM969 62h1v1h-1z" fill="#0000a0"/>
<text x="979.5" y="72.5" font-size="20" fill="#000090" font-weight="bold" font-family="'Liberation Serif',serif" stroke="#000090" stroke-width="0.5">?</text>
<path d="M1004.500 61.500h3v2h2v-2h1v8h-6z" fill="#fff" stroke="#000" stroke-width="1"/>
<path d="M1009 64h3v-2l4 3.500l-4 3.500v-2h-3z" fill="#20d0e0" stroke="#000" stroke-width="0.8" shape-rendering="geometricPrecision"/>
<path d="M1036 64h-3v-2l-5 3.500l5 3.500v-2h3z" fill="#4a8582" shape-rendering="geometricPrecision"/>
<path d="M1032.500 61.500h4v8h-4" fill="none" stroke="#4a8582" stroke-width="1"/>
<path d="M1050.500 59.500h2v2h3v-2h2v11h-7z" fill="#fff" stroke="#000" stroke-width="1"/>
<path d="M1048 66l3 4l10 -11" fill="none" stroke="#e00000" stroke-width="1.6" shape-rendering="geometricPrecision"/>
<rect x="1068" y="55" width="146" height="20" fill="#fff"/>
<rect x="1068" y="55" width="146" height="1" fill="#4a6c6c"/>
<rect x="1068" y="55" width="1" height="20" fill="#4a6c6c"/>
<rect x="1069" y="56" width="145" height="1" fill="#4a8582"/>
<rect x="1069" y="56" width="1" height="18" fill="#4a8582"/>
<rect x="1069" y="74" width="146" height="1" fill="#d0d8d8"/>
<rect x="1214" y="55" width="1" height="20" fill="#d0d8d8"/>
<rect x="1197" y="57" width="16" height="16" fill="url(#tb)"/>
<rect x="1197" y="57" width="17" height="1" fill="#fff"/>
<rect x="1197" y="57" width="1" height="17" fill="#fff"/>
<rect x="1197" y="73" width="17" height="1" fill="#4a6c6c"/>
<rect x="1213" y="57" width="1" height="17" fill="#4a6c6c"/>
<rect x="1198" y="72" width="15" height="1" fill="#7aa4a4"/>
<rect x="1212" y="58" width="1" height="15" fill="#7aa4a4"/>
<path d="M1202 64h7l-3.500 3.500z" fill="#000"/>
<text x="1072" y="69.5" font-size="12" fill="#000" textLength="83" lengthAdjust="spacingAndGlyphs" stroke="#000" stroke-width="0.3">---使用的元件---</text>
<rect x="136" y="147" width="10" height="1" fill="#4a8582"/>
<rect x="138" y="149" width="6" height="1" fill="#4a8582"/>
<rect x="140" y="145" width="1" height="7" fill="#4a8582"/>
<path d="M159.500 144.500v10l8 -5zM156 146.500h3.500M156 152.500h3.500M167.500 149.500h3M163 145v2M163 152v2" fill="none" stroke="#4a8582" stroke-width="1" shape-rendering="geometricPrecision"/>
<path d="M180 148.500h2l1.200 -2.500l2 5l2 -5l2 5l2 -5l1.200 2.500h2" fill="none" stroke="#4a8582" stroke-width="1" shape-rendering="geometricPrecision"/>
<path d="M204 149.500h3.500M207.500 145v9.500M207.500 149l5 -4.500M207.500 150l5.500 4.500M210 154.500h3v-2.500" fill="none" stroke="#4a8582" stroke-width="1" shape-rendering="geometricPrecision"/>
<path d="M226 149.500h12M230.500 145v9l5 -4.500zM235.500 145v9" fill="none" stroke="#4a8582" stroke-width="1" shape-rendering="geometricPrecision"/>
<path d="M250.500 147.500h6c4 0 6 2 7 4c-1 2 -3 4 -7 4h-6zM247 149.500h3.500M247 153.500h3.500M263.500 151.500h3" fill="none" stroke="#4a8582" stroke-width="1" shape-rendering="geometricPrecision"/>
<text x="249" y="146.5" font-size="6" fill="#4a8582" font-weight="bold" textLength="9" lengthAdjust="spacingAndGlyphs">TTL</text>
<path d="M273.500 147.500c1.500 2 1.500 6 0 8c5 0 8 -1 11 -4c-3 -3 -6 -4 -11 -4zM270 149.500h4M270 153.500h4" fill="none" stroke="#4a8582" stroke-width="1" shape-rendering="geometricPrecision"/>
<text x="270" y="146.5" font-size="6" fill="#4a8582" font-weight="bold" textLength="15" lengthAdjust="spacingAndGlyphs">CMOS</text>
<circle cx="301" cy="149" r="4.500" fill="none" stroke="#4a8582" stroke-width="1" shape-rendering="geometricPrecision"/>
<path d="M293.500 149h3M305.500 149h3.500" fill="none" stroke="#4a8582" stroke-width="1" shape-rendering="geometricPrecision"/>
<text x="298.3" y="152" font-size="7" fill="#4a8582" font-weight="bold">M</text>
<path d="M318.500 144.500h10v10h-10zM321.500 146.500h4v6h-4zM321.500 149.500h4" fill="none" stroke="#4a8582" stroke-width="1" shape-rendering="geometricPrecision"/>
<text x="347.5" y="151" font-size="7" fill="#4a8582" font-weight="bold" textLength="15.5" lengthAdjust="spacingAndGlyphs">MISC</text>
<path d="M373.500 155v-6h2.500v6zM379 155v-11h4v11M376 146l3 -2" fill="none" stroke="#4a8582" stroke-width="1.1" shape-rendering="geometricPrecision"/>
<text x="372" y="156" font-size="6" fill="#4a8582" font-weight="bold" textLength="11" lengthAdjust="spacingAndGlyphs">0 1</text>
<path d="M396 149c2 -6 7 -6 9 0" fill="none" stroke="#4a8582" stroke-width="1.1" shape-rendering="geometricPrecision"/>
<text x="394.5" y="156" font-size="8.5" fill="#4a8582" font-weight="bold" textLength="13" lengthAdjust="spacingAndGlyphs" font-family="'Liberation Serif',serif">0V</text>
<path d="M431.500 155v-11M426 144l5.500 6l5.500 -6" fill="none" stroke="#4a8582" stroke-width="1.1" shape-rendering="geometricPrecision"/>
<rect x="133" y="172" width="14" height="1" fill="#4a8582"/>
<rect x="133" y="175" width="8" height="1" fill="#4a8582"/>
<rect x="133" y="178" width="8" height="1" fill="#4a8582"/>
<rect x="133" y="181" width="8" height="1" fill="#4a8582"/>
<rect x="133" y="184" width="13" height="1" fill="#4a8582"/>
<text x="140" y="184" font-size="9" fill="#4a8582" font-weight="bold">¶</text>
<path d="M156 177.500h13M163 172l6 5.500l-6 5.500M169.500 172v11" fill="none" stroke="#4a8582" stroke-width="1.2" shape-rendering="geometricPrecision"/>
<path d="M162 183h2v1h-2zM166 183h2v1h-2zM170 183h2v1h-2z" fill="#4a8582"/>
<rect x="178" y="170" width="9" height="9" fill="url(#hz)"/>
<circle cx="188" cy="180" r="4.500" fill="url(#hz)" shape-rendering="geometricPrecision"/>
<circle cx="206" cy="174.500" r="4.500" fill="url(#hz)" shape-rendering="geometricPrecision"/>
<path d="M204.500 176.500v8h12v-13h-6" fill="none" stroke="#4a8582" stroke-width="1" shape-rendering="geometricPrecision"/>
<path d="M206 179h8M206 181.500h5M213 182l2 -3" fill="none" stroke="#4a8582" stroke-width="1" shape-rendering="geometricPrecision"/>
<path d="M226.500 170.500h8l3 3v11h-11zM230.500 176.500h4v5h-4zM229 175h7" fill="none" stroke="#4a8582" stroke-width="1.1" shape-rendering="geometricPrecision"/>
<rect x="249" y="170" width="6" height="7" fill="url(#hz)"/>
<path d="M250.500 177v7.500h11v-13h-6M252 179h8M252 181.500h5M259 182l2 -3" fill="none" stroke="#4a8582" stroke-width="1" shape-rendering="geometricPrecision"/>
<text x="272.5" y="182" font-size="13" fill="#4a8582" font-weight="bold" font-family="'Liberation Serif',serif" stroke="#4a8582" stroke-width="0.5">B</text>
<path d="M295 181l10 -7.500" fill="none" stroke="#4a8582" stroke-width="2.2" shape-rendering="geometricPrecision"/>
<text x="318" y="182" font-size="13" fill="#4a8582" font-weight="bold" textLength="10.5" lengthAdjust="spacingAndGlyphs" font-family="'Liberation Serif',serif">U</text>
<rect x="318" y="184" width="11" height="1" fill="#4a8582"/>
<circle cx="348" cy="176" r="6" fill="url(#hz)" shape-rendering="geometricPrecision"/>
<text x="339" y="185" font-size="8" fill="#4a8582" font-weight="bold" font-family="'Liberation Serif',serif">A</text>
<rect x="364" y="172" width="11" height="1" fill="#4a8582"/>
<rect x="364" y="174" width="8" height="1" fill="#4a8582"/>
<rect x="364" y="177" width="11" height="1" fill="#4a8582"/>
<rect x="364" y="179" width="8" height="1" fill="#4a8582"/>
<rect x="364" y="182" width="11" height="1" fill="#4a8582"/>
<rect x="387" y="172" width="12" height="1" fill="#4a8582"/>
<rect x="389" y="174" width="8" height="1" fill="#4a8582"/>
<rect x="387" y="177" width="12" height="1" fill="#4a8582"/>
<rect x="389" y="179" width="8" height="1" fill="#4a8582"/>
<rect x="387" y="182" width="12" height="1" fill="#4a8582"/>
<rect x="410" y="172" width="12" height="1" fill="#4a8582"/>
<rect x="413" y="174" width="9" height="1" fill="#4a8582"/>
<rect x="410" y="177" width="12" height="1" fill="#4a8582"/>
<rect x="413" y="179" width="9" height="1" fill="#4a8582"/>
<rect x="410" y="182" width="12" height="1" fill="#4a8582"/>
<path d="M432 172h2v2h-2z" fill="#4a8582"/>
<rect x="436" y="172" width="10" height="1" fill="#4a8582"/>
<path d="M432 177h2v2h-2z" fill="#4a8582"/>
<rect x="436" y="177" width="10" height="1" fill="#4a8582"/>
<path d="M432 182h2v2h-2z" fill="#4a8582"/>
<rect x="436" y="182" width="10" height="1" fill="#4a8582"/>
<rect x="454" y="171" width="8" height="8" fill="url(#hz)"/>
<path d="M458.500 179v5.500h11v-13h-7M460 180h8M463 182.500h5" fill="none" stroke="#4a8582" stroke-width="1" shape-rendering="geometricPrecision"/>
<rect x="738" y="115" width="16" height="15" fill="url(#bl)"/>
<path d="M738.5 115.5h15v14h-15z" fill="none" stroke="#0000ff" stroke-width="1"/>
<path d="M759 121h5v1h-5zM760 122h3v1h-3zM761 123h1v1h-1z" fill="#000"/>
<path d="M741.500 118v9l9 -4.500zM739 120.500h2.500M739 125.500h2.500M750.500 122.500h3" fill="none" stroke="#000" stroke-width="1" shape-rendering="geometricPrecision"/>
<rect x="773" y="115" width="16" height="15" fill="url(#bl)"/>
<path d="M773.5 115.5h15v14h-15z" fill="none" stroke="#0000ff" stroke-width="1"/>
<path d="M794 121h5v1h-5zM795 122h3v1h-3zM796 123h1v1h-1z" fill="#000"/>
<path d="M775 122.500h2l1 -1.500l1.500 3l1.500 -3l1.500 3l1.500 -3l1 1.500h2" fill="none" stroke="#000" stroke-width="1" shape-rendering="geometricPrecision"/>
<rect x="807" y="114" width="16" height="15" fill="url(#bl)"/>
<path d="M807.5 114.5h15v14h-15z" fill="none" stroke="#0000ff" stroke-width="1"/>
<path d="M828 120h5v1h-5zM829 121h3v1h-3zM830 122h1v1h-1z" fill="#000"/>
<path d="M809 121.500h12M812.500 118v7l4.500 -3.500zM817.500 118v7" fill="#000" stroke="#000" stroke-width="1" shape-rendering="geometricPrecision"/>
<rect x="842" y="114" width="16" height="15" fill="url(#bl)"/>
<path d="M842.5 114.5h15v14h-15z" fill="none" stroke="#0000ff" stroke-width="1"/>
<path d="M863 120h5v1h-5zM864 121h3v1h-3zM865 122h1v1h-1z" fill="#000"/>
<path d="M844 121.500h5M849.500 117v9M851.500 116v11M851.500 118.500h3v-2.500M851.500 124.500h3v2.500M851.500 121.500h5" fill="none" stroke="#000" stroke-width="1.1" shape-rendering="geometricPrecision"/>
<rect x="878" y="115" width="16" height="15" fill="url(#bl)"/>
<path d="M878.5 115.5h15v14h-15z" fill="none" stroke="#0000ff" stroke-width="1"/>
<path d="M899 121h5v1h-5zM900 122h3v1h-3zM901 123h1v1h-1z" fill="#000"/>
<path d="M881.500 118.500h9v9h-9z" fill="none" stroke="#000" stroke-width="1.3"/>
<path d="M884 120h4v2h-4z" fill="#00e000"/>
<path d="M884 124h1v1h-1zM887 124h1v1h-1z" fill="#000"/>
<rect x="912" y="114" width="16" height="15" fill="url(#bl)"/>
<path d="M912.5 114.5h15v14h-15z" fill="none" stroke="#0000ff" stroke-width="1"/>
<path d="M933 120h5v1h-5zM934 121h3v1h-3zM935 122h1v1h-1z" fill="#000"/>
<text x="915" y="126" font-size="12" fill="#000" stroke="#000" stroke-width="0.3">M</text>
<rect x="947" y="114" width="16" height="15" fill="url(#bl)"/>
<path d="M947.5 114.5h15v14h-15z" fill="none" stroke="#0000ff" stroke-width="1"/>
<path d="M968 120h5v1h-5zM969 121h3v1h-3zM970 122h1v1h-1z" fill="#000"/>
<path d="M955 116v4M950 120.500h10M952 123.500h6M955 124v4" fill="none" stroke="#000" stroke-width="1.2"/>
<rect x="982" y="114" width="16" height="15" fill="url(#bl)"/>
<path d="M982.5 114.5h15v14h-15z" fill="none" stroke="#0000ff" stroke-width="1"/>
<path d="M1003 120h5v1h-5zM1004 121h3v1h-3zM1005 122h1v1h-1z" fill="#000"/>
<path d="M990 116.500l5 5l-5 5l-5 -5z" fill="none" stroke="#000" stroke-width="1.2" shape-rendering="geometricPrecision"/>
<path d="M987.500 121.500c1 -2 2 -2 2.500 0s1.500 2 2.500 0" fill="none" stroke="#000" stroke-width="1" shape-rendering="geometricPrecision"/>
<path d="M1033.5 115.5h9v12h-9z" fill="none" stroke="#4a8582" stroke-width="1"/>
<rect x="1035" y="116" width="6" height="4" fill="url(#hz)"/>
<circle cx="1038" cy="123" r="2" fill="none" stroke="#4a8582" shape-rendering="geometricPrecision"/>
<rect x="1031" y="117" width="1" height="9" fill="#4a8582"/>
<rect x="1045" y="117" width="1" height="9" fill="#4a8582"/>
<rect x="1031" y="127" width="15" height="1" fill="#4a8582"/>
<rect x="1054" y="115" width="14" height="7" fill="url(#hz)"/>
<path d="M1054.5 122v7.500h14v-7.500" fill="none" stroke="#4a8582" stroke-width="1"/>
<path d="M1057 124h2v1h-2zM1061 124h2v1h-2zM1064 126h2v2h-2z" fill="#4a8582"/>
<path d="M1053 114h1v1h-1z" fill="#4a8582"/>
<path d="M1076.5 115.5h5v5h-5zM1085.5 115.5h5v5h-5z" fill="none" stroke="#4a8582" stroke-width="1"/>
<path d="M1078 118h1v1h-1zM1079 117h1v1h-1zM1087 117h1v1h-1zM1088 118h1v1h-1z" fill="#4a8582"/>
<rect x="1076" y="128" width="16" height="1" fill="#4a8582"/>
<path d="M1078 125h1v3h-1zM1081 125h1v3h-1zM1086 125h1v3h-1zM1089 125h1v3h-1zM1077 126h5v1h-5zM1085 126h5v1h-5z" fill="#4a8582"/>
<path d="M1099.5 115.5h14v13h-14zM1099.5 123.5h14" fill="none" stroke="#4a8582" stroke-width="1"/>
<path d="M1100 121l2.500 -4l2.500 4l2.500 -4l2.500 4l2 -3" fill="none" stroke="#4a8582" stroke-width="1" shape-rendering="geometricPrecision"/>
<path d="M1101 126h4v1h-4zM1102 125h1v3h-1z" fill="#4a8582"/>
<path d="M1111 116h2v7h-2z" fill="url(#hz)"/>
<rect x="1123" y="115" width="14" height="7" fill="url(#hz)"/>
<path d="M1123.5 122v7.500h14v-7.500" fill="none" stroke="#4a8582" stroke-width="1"/>
<path d="M1126 124h2v1h-2zM1130 124h2v1h-2zM1133 126h2v2h-2z" fill="#4a8582"/>
<path d="M1122 114h1v1h-1z" fill="#4a8582"/>
<rect x="1146" y="115" width="14" height="8" fill="url(#hz)"/>
<rect x="1146" y="129" width="15" height="1" fill="#4a8582"/>
<rect x="1160" y="123" width="1" height="7" fill="#4a8582"/>
<path d="M1148 126h2v2h-2zM1152 126h2v2h-2zM1156 126h2v2h-2zM1148 124h10v1h-10z" fill="#4a8582"/>
<path d="M1145 114h1v1h-1z" fill="#4a8582"/>
<rect x="1169" y="115" width="14" height="8" fill="url(#hz)"/>
<rect x="1169" y="129" width="15" height="1" fill="#4a8582"/>
<rect x="1183" y="123" width="1" height="7" fill="#4a8582"/>
<path d="M1171 126h2v2h-2zM1175 126h2v2h-2zM1179 126h2v2h-2zM1171 124h10v1h-10z" fill="#4a8582"/>
<path d="M1168 114h1v1h-1z" fill="#4a8582"/>
<rect x="1194" y="115" width="12" height="14" fill="url(#hz)"/>
<path d="M1191 115h1v1h-1zM1191 117h1v1h-1zM1191 119h1v1h-1zM1191 121h1v1h-1zM1191 123h1v1h-1zM1191 125h1v1h-1zM1191 127h1v1h-1z" fill="#4a8582"/>
<path d="M1214.5 115.5h14v8h-14z" fill="none" stroke="#4a8582" stroke-width="1"/>
<path d="M1217 122l8 -6" fill="none" stroke="#4a8582" stroke-width="1" shape-rendering="geometricPrecision"/>
<path d="M1226 117h2v2h-2zM1226 120h2v2h-2z" fill="#4a8582"/>
<path d="M1216 125h3v3h-3zM1220 125h3v3h-3zM1224 125h4v3h-4z" fill="#4a8582"/>
<rect x="1214" y="128" width="15" height="1" fill="#4a8582"/>
<rect x="1238" y="116" width="14" height="6" fill="url(#hz)"/>
<path d="M1239 124h1v1h-1zM1241 124h1v1h-1zM1243 124h1v1h-1zM1245 124h1v1h-1zM1247 124h1v1h-1zM1249 124h1v1h-1z" fill="#4a8582"/>
<rect x="1238" y="126" width="14" height="3" fill="url(#hz)"/>
<path d="M1237 114h1v1h-1z" fill="#4a8582"/>
<rect x="1261" y="116" width="14" height="7" fill="url(#hz)"/>
<path d="M1262 125h1v1h-1zM1264 125h1v1h-1zM1266 125h1v1h-1zM1268 125h1v1h-1zM1270 125h1v1h-1zM1272 125h1v1h-1zM1261 127h1v1h-1zM1263 127h1v1h-1zM1265 127h1v1h-1zM1267 127h1v1h-1zM1269 127h1v1h-1zM1271 127h1v1h-1zM1273 127h1v1h-1z" fill="#4a8582"/>
<rect x="1275" y="123" width="1" height="6" fill="#4a8582"/>
<path d="M1260 114h1v1h-1z" fill="#4a8582"/>
<rect x="1309" y="116" width="11" height="13" fill="url(#hz)"/>
<path d="M1310 115h1v1h-1zM1312 115h1v1h-1zM1314 115h1v1h-1zM1316 115h1v1h-1zM1318 115h1v1h-1zM1310 129h1v1h-1zM1312 129h1v1h-1zM1314 129h1v1h-1zM1316 129h1v1h-1zM1318 129h1v1h-1zM1307 119h2v1h-2zM1307 124h2v1h-2zM1320 121h2v1h-2z" fill="#4a8582"/>
<rect x="1284" y="118.500" width="14.500" height="9" rx="3" fill="#ffff00" stroke="#909000" stroke-width="0.800" shape-rendering="geometricPrecision"/>
<path d="M1283 114l5 .5l-1.500 1.500l2.500 2.500l-2 1l-2 -2l-1.500 1.500z" fill="#ffff00" stroke="#909000" stroke-width="0.7" shape-rendering="geometricPrecision"/>
<text x="1285.5" y="126" font-size="7.5" fill="#000" font-weight="bold" textLength="11.5" lengthAdjust="spacingAndGlyphs">1.4v</text>
<rect x="121" y="196" width="92" height="14" fill="#d4e0ec"/>
<text x="124" y="207.5" font-size="12" fill="#7aa0a4" textLength="58" lengthAdjust="spacingAndGlyphs">设计工具箱</text>
<rect x="217" y="197" width="13" height="1" fill="#fff"/>
<rect x="217" y="197" width="1" height="13" fill="#fff"/>
<rect x="217" y="209" width="13" height="1" fill="#4a6c6c"/>
<rect x="229" y="197" width="1" height="13" fill="#4a6c6c"/>
<rect x="218" y="208" width="11" height="1" fill="#7aa4a4"/>
<rect x="228" y="198" width="1" height="11" fill="#7aa4a4"/>
<rect x="232" y="197" width="14" height="1" fill="#fff"/>
<rect x="232" y="197" width="1" height="13" fill="#fff"/>
<rect x="232" y="209" width="14" height="1" fill="#4a6c6c"/>
<rect x="245" y="197" width="1" height="13" fill="#4a6c6c"/>
<rect x="233" y="208" width="12" height="1" fill="#7aa4a4"/>
<rect x="244" y="198" width="1" height="11" fill="#7aa4a4"/>
<path d="M223 201h1v1h-1zM222 202h3v1h-3zM221 203h5v1h-5zM221 205h5v1h-5z" fill="#5c8c8c"/>
<path d="M235 200h2v1h-2zM240 200h2v1h-2zM236 201h2v1h-2zM239 201h2v1h-2zM237 202h3v1h-3zM237 203h3v1h-3zM236 204h2v1h-2zM239 204h2v1h-2zM235 205h2v1h-2zM240 205h2v1h-2z" fill="#000"/>
<rect x="256" y="194" width="1" height="610" fill="#585858"/>
<rect x="257" y="194" width="1" height="587" fill="#b0b0b0"/>
<rect x="118" y="803" width="139" height="1" fill="#4a8582"/>
<rect x="128" y="226" width="110" height="1" fill="#4a8582"/>
<rect x="240" y="224" width="1" height="553" fill="#4a8582"/>
<rect x="241" y="225" width="1" height="552" fill="#9cbcbc"/>
<rect x="128" y="252" width="110" height="1" fill="#4a8582"/>
<rect x="128" y="252" width="1" height="501" fill="#4a8582"/>
<rect x="129" y="253" width="1" height="500" fill="#a0a0a0"/>
<rect x="130" y="254" width="110" height="481" fill="#fff"/>
<rect x="129" y="776" width="112" height="1" fill="#4a8582"/>
<rect x="130" y="777" width="112" height="1" fill="#9cbcbc"/>
<path d="M139 236h5v1h-5zM138 237h1v9h-1zM144 237h5v1h-5zM148 238h1v2h-1zM138 245h11v1h-11z" fill="#000"/>
<rect x="139" y="237" width="9" height="8" fill="#ffff60"/>
<path d="M139 245l3 -6h12l-4 6z" fill="#ffff00" stroke="#000" stroke-width="1"/>
<path d="M140 238h7v1h-7zM140 240h1v1h-1zM142 242h1v1h-1z" fill="#c8c860"/>
<path d="M147 234h1v1h-1zM148 233h3v1h-3zM151 234h1v2h-1zM150 236h3v1h-3zM151 237h1v1h-1zM152 235h1v1h-1zM150 235h1v1h-1z" fill="#000"/>
<path d="M165.5 232.5h13v13h-12l-1 -1z" fill="#fff" stroke="#000" stroke-width="1"/>
<rect x="168" y="233" width="8" height="6" fill="#ffff60"/>
<path d="M176 233h1v2h-1z" fill="#ff0000"/>
<path d="M168 241h8v1h-8zM168 241h1v4h-1zM175 241h1v4h-1zM170 242h2v3h-2z" fill="#000"/>
<path d="M178 234h1v12h-1zM167 245h12v1h-12z" fill="#808080"/>
<path d="M191.5 237.5h11v8h-11z" fill="#fff" stroke="#000" stroke-width="1"/>
<rect x="192" y="236" width="11" height="3" fill="#0000a0"/>
<path d="M194 240h6v1h-6zM194 242h6v1h-6zM194 244h6v1h-6z" fill="#000"/>
<path d="M202 232h3v1h-3zM202 232h1v3h-1zM203 233h1v1h-1zM204 234h1v1h-1zM205 235h1v1h-1z" fill="#c00000"/>
<text x="217" y="244.5" font-size="13" fill="#000">T</text>
<rect x="223" y="233" width="8" height="12" fill="#0000a0"/>
<text x="223.5" y="244" font-size="12" fill="#fff">e</text>
<path d="M136.5 257.5h11v11l-1 1h-9l-1 -1z" fill="#fff" stroke="#000" stroke-width="1"/>
<path d="M140 256h4v1h-4zM139 257h6v1h-6z" fill="#808080"/>
<path d="M145 260h1v1h-1zM144 261h1v1h-1zM143 262h1v1h-1zM142 263h1v1h-1zM141 264h1v1h-1zM140 265h2v1h-2zM139 264h1v1h-1zM138 263h1v1h-1zM144 260h1v1h-1zM143 261h1v1h-1zM142 262h1v1h-1zM141 263h1v1h-1zM139 263h1v1h-1zM140 264h1v1h-1z" fill="#000"/>
<text x="155" y="267.5" font-size="12" fill="#000" textLength="28" lengthAdjust="spacingAndGlyphs" stroke="#000" stroke-width="0.3">电路1</text>
<path d="M153 273h11v1h-11zM153 274h1v1h-1zM163 274h2v1h-2zM153 275h1v1h-1zM157 275h3v1h-3zM163 275h1v1h-1zM165 275h1v1h-1zM153 276h1v1h-1zM157 276h1v1h-1zM160 276h1v1h-1zM163 276h1v1h-1zM166 276h1v1h-1zM153 277h1v1h-1zM157 277h1v1h-1zM160 277h1v1h-1zM163 277h1v1h-1zM167 277h1v1h-1zM153 278h1v1h-1zM157 278h1v1h-1zM160 278h1v1h-1zM163 278h6v1h-6zM153 279h1v1h-1zM157 279h3v1h-3zM168 279h1v1h-1zM153 280h1v1h-1zM168 280h1v1h-1zM153 281h1v1h-1zM168 281h1v1h-1zM153 282h1v1h-1zM156 282h1v1h-1zM159 282h1v1h-1zM168 282h1v1h-1zM153 283h1v1h-1zM157 283h1v1h-1zM159 283h1v1h-1zM168 283h1v1h-1zM153 284h1v1h-1zM157 284h3v1h-3zM168 284h1v1h-1zM153 285h1v1h-1zM158 285h2v1h-2zM168 285h1v1h-1zM153 286h1v1h-1zM157 286h1v1h-1zM159 286h1v1h-1zM168 286h1v1h-1zM153 287h1v1h-1zM168 287h1v1h-1zM153 288h16v1h-16z" fill="#000"/>
<path d="M154 274h9v1h-9zM154 275h3v1h-3zM160 275h3v1h-3zM164 275h1v1h-1zM156 276h1v1h-1zM158 276h2v1h-2zM161 276h2v1h-2zM164 276h2v1h-2zM154 277h3v1h-3zM158 277h2v1h-2zM164 277h3v1h-3zM154 278h1v1h-1zM156 278h1v1h-1zM158 278h2v1h-2zM162 278h1v1h-1zM154 279h1v1h-1zM156 279h1v1h-1zM160 279h1v1h-1zM162 279h6v1h-6zM154 280h1v1h-1zM156 280h5v1h-5zM162 280h6v1h-6zM154 281h1v1h-1zM156 281h5v1h-5zM162 281h6v1h-6zM157 282h2v1h-2zM160 282h1v1h-1zM162 282h6v1h-6zM154 283h3v1h-3zM158 283h1v1h-1zM160 283h1v1h-1zM162 283h6v1h-6zM154 284h3v1h-3zM162 284h6v1h-6zM154 285h4v1h-4zM160 285h8v1h-8zM154 286h1v1h-1zM156 286h1v1h-1zM158 286h1v1h-1zM160 286h8v1h-8zM154 287h1v1h-1zM156 287h12v1h-12z" fill="#fff"/>
<path d="M154 276h2v1h-2zM161 277h2v1h-2zM155 278h1v1h-1zM161 278h1v1h-1zM155 279h1v1h-1zM161 279h1v1h-1zM155 280h1v1h-1zM161 280h1v1h-1zM155 281h1v1h-1zM161 281h1v1h-1zM154 282h2v1h-2zM161 282h1v1h-1zM161 283h1v1h-1zM160 284h2v1h-2zM155 286h1v1h-1zM155 287h1v1h-1z" fill="#ff0000"/>
<text x="174" y="286" font-size="12" fill="#000" textLength="28" lengthAdjust="spacingAndGlyphs" stroke="#000" stroke-width="0.3">电路1</text>
<path d="M136.5 293.5h11v11l-1 1h-9l-1 -1z" fill="#fff" stroke="#000" stroke-width="1"/>
<path d="M140 292h4v1h-4zM139 293h6v1h-6z" fill="#808080"/>
<path d="M145 296h1v1h-1zM144 297h1v1h-1zM143 298h1v1h-1zM142 299h1v1h-1zM141 300h1v1h-1zM140 301h2v1h-2zM139 300h1v1h-1zM138 299h1v1h-1zM144 296h1v1h-1zM143 297h1v1h-1zM142 298h1v1h-1zM141 299h1v1h-1zM139 299h1v1h-1zM140 300h1v1h-1z" fill="#000"/>
<text x="154" y="304" font-size="12" fill="#000" textLength="60" lengthAdjust="spacingAndGlyphs" stroke="#000" stroke-width="0.3">变压器试验</text>
<rect x="172" y="308" width="63" height="16" fill="url(#tb)"/>
<path d="M153 309h11v1h-11zM153 310h1v1h-1zM163 310h2v1h-2zM153 311h1v1h-1zM157 311h3v1h-3zM163 311h1v1h-1zM165 311h1v1h-1zM153 312h1v1h-1zM157 312h1v1h-1zM160 312h1v1h-1zM163 312h1v1h-1zM166 312h1v1h-1zM153 313h1v1h-1zM157 313h1v1h-1zM160 313h1v1h-1zM163 313h1v1h-1zM167 313h1v1h-1zM153 314h1v1h-1zM157 314h1v1h-1zM160 314h1v1h-1zM163 314h6v1h-6zM153 315h1v1h-1zM157 315h3v1h-3zM168 315h1v1h-1zM153 316h1v1h-1zM168 316h1v1h-1zM153 317h1v1h-1zM168 317h1v1h-1zM153 318h1v1h-1zM156 318h1v1h-1zM159 318h1v1h-1zM168 318h1v1h-1zM153 319h1v1h-1zM157 319h1v1h-1zM159 319h1v1h-1zM168 319h1v1h-1zM153 320h1v1h-1zM157 320h3v1h-3zM168 320h1v1h-1zM153 321h1v1h-1zM158 321h2v1h-2zM168 321h1v1h-1zM153 322h1v1h-1zM157 322h1v1h-1zM159 322h1v1h-1zM168 322h1v1h-1zM153 323h1v1h-1zM168 323h1v1h-1zM153 324h16v1h-16z" fill="#000"/>
<path d="M154 310h9v1h-9zM154 311h3v1h-3zM160 311h3v1h-3zM164 311h1v1h-1zM156 312h1v1h-1zM158 312h2v1h-2zM161 312h2v1h-2zM164 312h2v1h-2zM154 313h3v1h-3zM158 313h2v1h-2zM164 313h3v1h-3zM154 314h1v1h-1zM156 314h1v1h-1zM158 314h2v1h-2zM162 314h1v1h-1zM154 315h1v1h-1zM156 315h1v1h-1zM160 315h1v1h-1zM162 315h6v1h-6zM154 316h1v1h-1zM156 316h5v1h-5zM162 316h6v1h-6zM154 317h1v1h-1zM156 317h5v1h-5zM162 317h6v1h-6zM157 318h2v1h-2zM160 318h1v1h-1zM162 318h6v1h-6zM154 319h3v1h-3zM158 319h1v1h-1zM160 319h1v1h-1zM162 319h6v1h-6zM154 320h3v1h-3zM162 320h6v1h-6zM154 321h4v1h-4zM160 321h8v1h-8zM154 322h1v1h-1zM156 322h1v1h-1zM158 322h1v1h-1zM160 322h8v1h-8zM154 323h1v1h-1zM156 323h12v1h-12z" fill="#fff"/>
<path d="M154 312h2v1h-2zM161 313h2v1h-2zM155 314h1v1h-1zM161 314h1v1h-1zM155 315h1v1h-1zM161 315h1v1h-1zM155 316h1v1h-1zM161 316h1v1h-1zM155 317h1v1h-1zM161 317h1v1h-1zM154 318h2v1h-2zM161 318h1v1h-1zM161 319h1v1h-1zM160 320h2v1h-2zM155 322h1v1h-1zM155 323h1v1h-1z" fill="#ff0000"/>
<text x="173" y="322" font-size="12" fill="#000" textLength="60" lengthAdjust="spacingAndGlyphs" stroke="#000" stroke-width="0.3">变压器试验</text>
<path d="M142 271h1v1h-1zM142 273h1v1h-1zM142 275h1v1h-1zM142 277h1v1h-1zM142 279h1v1h-1zM142 281h1v1h-1zM144 282h1v1h-1zM146 282h1v1h-1zM148 282h1v1h-1zM150 282h1v1h-1zM142 307h1v1h-1zM142 309h1v1h-1zM142 311h1v1h-1zM142 313h1v1h-1zM142 315h1v1h-1zM142 317h1v1h-1zM144 318h1v1h-1zM146 318h1v1h-1zM148 318h1v1h-1zM150 318h1v1h-1z" fill="#a0a0a0"/>
<rect x="130" y="735" width="110" height="18" fill="#ececec"/>
<path d="M139 743h1v1h-1zM138 744h2v1h-2z" fill="#606060"/>
<path d="M140 740l-4 4l4 4z" fill="#606060"/>
<path d="M226 740l4 4l-4 4z" fill="#606060"/>
<rect x="157" y="737" width="61" height="14" fill="url(#tb)"/>
<rect x="158" y="744" width="59" height="6" fill="#d4d4d4"/>
<rect x="157" y="736" width="61" height="1" fill="#b0b8b8"/>
<rect x="157" y="750" width="61" height="1" fill="#a0a8a8"/>
<rect x="217" y="737" width="1" height="14" fill="#a0a8a8"/>
<rect x="157" y="737" width="1" height="14" fill="#c0c8c8"/>
<path d="M184 741h1v6h-1zM187 741h1v6h-1zM190 741h1v6h-1z" fill="#606868"/>
<rect x="129" y="753" width="111" height="23" fill="url(#tb)"/>
<text x="167" y="772" font-size="12" fill="#000" textLength="24" lengthAdjust="spacingAndGlyphs" stroke="#000" stroke-width="0.3">层次</text>
<rect x="130" y="777" width="1" height="15" fill="#fff"/>
<rect x="174" y="777" width="1" height="15" fill="#4a6c6c"/>
<rect x="173" y="777" width="1" height="15" fill="#8cb0b0"/>
<rect x="131" y="792" width="43" height="1" fill="#4a6c6c"/>
<rect x="131" y="791" width="42" height="1" fill="#8cb0b0"/>
<rect x="176" y="777" width="1" height="15" fill="#fff"/>
<rect x="239" y="777" width="1" height="15" fill="#4a6c6c"/>
<rect x="238" y="777" width="1" height="15" fill="#8cb0b0"/>
<rect x="177" y="792" width="62" height="1" fill="#4a6c6c"/>
<rect x="177" y="791" width="61" height="1" fill="#8cb0b0"/>
<text x="136" y="789" font-size="12" fill="#000" textLength="23" lengthAdjust="spacingAndGlyphs" stroke="#000" stroke-width="0.3">可见</text>
<text x="182" y="789" font-size="12" fill="#000" textLength="48" lengthAdjust="spacingAndGlyphs" stroke="#000" stroke-width="0.3">项目视图</text>
<rect x="261" y="196" width="1179" height="577" fill="#fff"/>
<rect x="261" y="196" width="1179" height="1" fill="#5c9c9c"/>
<rect x="262" y="197" width="1178" height="1" fill="#606060"/>
<rect x="261" y="196" width="1" height="577" fill="#5c9c9c"/>
<rect x="262" y="197" width="1" height="576" fill="#606060"/>
<rect x="263" y="198" width="2" height="575" fill="url(#ck)"/>
<rect x="265" y="198" width="895" height="575" fill="#fff"/>
<rect x="286" y="198" width="4" height="575" fill="url(#ck)"/>
<rect x="1136" y="198" width="4" height="575" fill="url(#ck)"/>
<rect x="1160" y="198" width="4" height="575" fill="url(#ck)"/>
<rect x="1164" y="198" width="276" height="575" fill="url(#gy)"/>
<rect x="290" y="198" width="846" height="575" fill="url(#dots)"/>
<path d="M274 201h1v1h-1zM1141 201h1v1h-1zM1152 201h1v1h-1zM274 212h1v1h-1zM1141 212h1v1h-1zM1152 212h1v1h-1zM274 224h1v1h-1zM1141 224h1v1h-1zM1152 224h1v1h-1zM274 235h1v1h-1zM1141 235h1v1h-1zM1152 235h1v1h-1zM274 246h1v1h-1zM1141 246h1v1h-1zM1152 246h1v1h-1zM274 257h1v1h-1zM1141 257h1v1h-1zM1152 257h1v1h-1zM274 269h1v1h-1zM1141 269h1v1h-1zM1152 269h1v1h-1zM274 280h1v1h-1zM1141 280h1v1h-1zM1152 280h1v1h-1zM274 291h1v1h-1zM1141 291h1v1h-1zM1152 291h1v1h-1zM274 302h1v1h-1zM1141 302h1v1h-1zM1152 302h1v1h-1zM274 314h1v1h-1zM1141 314h1v1h-1zM1152 314h1v1h-1zM274 325h1v1h-1zM1141 325h1v1h-1zM1152 325h1v1h-1zM274 336h1v1h-1zM1141 336h1v1h-1zM1152 336h1v1h-1zM274 347h1v1h-1zM1141 347h1v1h-1zM1152 347h1v1h-1zM274 359h1v1h-1zM1141 359h1v1h-1zM1152 359h1v1h-1zM274 370h1v1h-1zM1141 370h1v1h-1zM1152 370h1v1h-1zM274 381h1v1h-1zM1141 381h1v1h-1zM1152 381h1v1h-1zM274 392h1v1h-1zM1141 392h1v1h-1zM1152 392h1v1h-1zM274 404h1v1h-1zM1141 404h1v1h-1zM1152 404h1v1h-1zM274 415h1v1h-1zM1141 415h1v1h-1zM1152 415h1v1h-1zM274 426h1v1h-1zM1141 426h1v1h-1zM1152 426h1v1h-1zM274 437h1v1h-1zM1141 437h1v1h-1zM1152 437h1v1h-1zM274 449h1v1h-1zM1141 449h1v1h-1zM1152 449h1v1h-1zM274 460h1v1h-1zM1141 460h1v1h-1zM1152 460h1v1h-1zM274 471h1v1h-1zM1141 471h1v1h-1zM1152 471h1v1h-1zM274 482h1v1h-1zM1141 482h1v1h-1zM1152 482h1v1h-1zM274 494h1v1h-1zM1141 494h1v1h-1zM1152 494h1v1h-1zM274 505h1v1h-1zM1141 505h1v1h-1zM1152 505h1v1h-1zM274 516h1v1h-1zM1141 516h1v1h-1zM1152 516h1v1h-1zM274 527h1v1h-1zM1141 527h1v1h-1zM1152 527h1v1h-1zM274 539h1v1h-1zM1141 539h1v1h-1zM1152 539h1v1h-1zM274 550h1v1h-1zM1141 550h1v1h-1zM1152 550h1v1h-1zM274 561h1v1h-1zM1141 561h1v1h-1zM1152 561h1v1h-1zM274 572h1v1h-1zM1141 572h1v1h-1zM1152 572h1v1h-1zM274 584h1v1h-1zM1141 584h1v1h-1zM1152 584h1v1h-1zM274 595h1v1h-1zM1141 595h1v1h-1zM1152 595h1v1h-1zM274 606h1v1h-1zM1141 606h1v1h-1zM1152 606h1v1h-1zM274 617h1v1h-1zM1141 617h1v1h-1zM1152 617h1v1h-1zM274 629h1v1h-1zM1141 629h1v1h-1zM1152 629h1v1h-1zM274 640h1v1h-1zM1141 640h1v1h-1zM1152 640h1v1h-1zM274 651h1v1h-1zM1141 651h1v1h-1zM1152 651h1v1h-1zM274 662h1v1h-1zM1141 662h1v1h-1zM1152 662h1v1h-1zM274 674h1v1h-1zM1141 674h1v1h-1zM1152 674h1v1h-1zM274 685h1v1h-1zM1141 685h1v1h-1zM1152 685h1v1h-1zM274 696h1v1h-1zM1141 696h1v1h-1zM1152 696h1v1h-1zM274 707h1v1h-1zM1141 707h1v1h-1zM1152 707h1v1h-1zM274 719h1v1h-1zM1141 719h1v1h-1zM1152 719h1v1h-1zM274 730h1v1h-1zM1141 730h1v1h-1zM1152 730h1v1h-1zM274 741h1v1h-1zM1141 741h1v1h-1zM1152 741h1v1h-1zM274 752h1v1h-1zM1141 752h1v1h-1zM1152 752h1v1h-1zM274 764h1v1h-1zM1141 764h1v1h-1zM1152 764h1v1h-1z" fill="#000"/>
<rect x="265" y="301" width="21" height="1" fill="#707070"/>
<rect x="1140" y="301" width="20" height="1" fill="#707070"/>
<rect x="265" y="421" width="21" height="1" fill="#707070"/>
<rect x="1140" y="421" width="20" height="1" fill="#707070"/>
<rect x="265" y="541" width="21" height="1" fill="#707070"/>
<rect x="1140" y="541" width="20" height="1" fill="#707070"/>
<rect x="265" y="661" width="21" height="1" fill="#707070"/>
<rect x="1140" y="661" width="20" height="1" fill="#707070"/>
<text x="276" y="242.5" font-size="10" fill="#686868" text-anchor="middle">A</text>
<text x="1149.5" y="242.5" font-size="10" fill="#686868" text-anchor="middle">A</text>
<text x="276" y="362.5" font-size="10" fill="#686868" text-anchor="middle">B</text>
<text x="1149.5" y="362.5" font-size="10" fill="#686868" text-anchor="middle">B</text>
<text x="276" y="482.5" font-size="10" fill="#686868" text-anchor="middle">C</text>
<text x="1149.5" y="482.5" font-size="10" fill="#686868" text-anchor="middle">C</text>
<text x="276" y="602.5" font-size="10" fill="#686868" text-anchor="middle">D</text>
<text x="1149.5" y="602.5" font-size="10" fill="#686868" text-anchor="middle">D</text>
<text x="276" y="722.5" font-size="10" fill="#686868" text-anchor="middle">E</text>
<text x="1149.5" y="722.5" font-size="10" fill="#686868" text-anchor="middle">E</text>
<rect x="376" y="280" width="34" height="1" fill="#ff0000"/>
<rect x="376" y="280" width="1" height="126" fill="#ff0000"/>
<rect x="410" y="280" width="12" height="1" fill="#000"/>
<rect x="376" y="406" width="1" height="10" fill="#000"/>
<rect x="522" y="280" width="11" height="1" fill="#000"/>
<rect x="533" y="280" width="147" height="1" fill="#ff0000"/>
<rect x="679" y="280" width="1" height="125" fill="#ff0000"/>
<rect x="589" y="280" width="1" height="35" fill="#ff0000"/>
<rect x="533" y="314" width="57" height="1" fill="#ff0000"/>
<rect x="533" y="314" width="1" height="125" fill="#ff0000"/>
<rect x="533" y="439" width="1" height="10" fill="#000"/>
<rect x="680" y="404" width="33" height="1" fill="#000"/>
<rect x="737" y="404" width="33" height="1" fill="#000"/>
<rect x="770" y="404" width="12" height="1" fill="#ff0000"/>
<rect x="781" y="280" width="1" height="125" fill="#ff0000"/>
<rect x="781" y="280" width="182" height="1" fill="#ff0000"/>
<rect x="963" y="280" width="9" height="1" fill="#000"/>
<rect x="1074" y="280" width="11" height="1" fill="#000"/>
<rect x="1085" y="280" width="12" height="1" fill="#ff0000"/>
<rect x="1096" y="280" width="1" height="327" fill="#ff0000"/>
<rect x="1007" y="606" width="90" height="1" fill="#ff0000"/>
<rect x="882" y="280" width="1" height="114" fill="#ff0000"/>
<rect x="882" y="394" width="1" height="11" fill="#000"/>
<rect x="882" y="450" width="1" height="10" fill="#000"/>
<rect x="882" y="460" width="1" height="147" fill="#ff0000"/>
<rect x="781" y="449" width="1" height="158" fill="#ff0000"/>
<rect x="781" y="606" width="169" height="1" fill="#ff0000"/>
<rect x="770" y="449" width="12" height="1" fill="#ff0000"/>
<rect x="739" y="449" width="31" height="1" fill="#000"/>
<rect x="680" y="449" width="31" height="1" fill="#000"/>
<rect x="679" y="449" width="1" height="158" fill="#ff0000"/>
<rect x="500" y="606" width="180" height="1" fill="#ff0000"/>
<rect x="950" y="606" width="11" height="1" fill="#000"/>
<rect x="996" y="606" width="11" height="1" fill="#000"/>
<rect x="376" y="470" width="1" height="137" fill="#ff0000"/>
<rect x="376" y="606" width="68" height="1" fill="#ff0000"/>
<rect x="376" y="459" width="1" height="11" fill="#000"/>
<rect x="444" y="606" width="11" height="1" fill="#000"/>
<rect x="490" y="606" width="10" height="1" fill="#000"/>
<rect x="376" y="607" width="1" height="11" fill="#000"/>
<rect x="364" y="617" width="24" height="1" fill="#000"/>
<rect x="368" y="621" width="15" height="1" fill="#000"/>
<rect x="372" y="625" width="7" height="1" fill="#000"/>
<rect x="533" y="495" width="1" height="11" fill="#000"/>
<rect x="522" y="505" width="12" height="1" fill="#ff0000"/>
<rect x="522" y="505" width="1" height="102" fill="#ff0000"/>
<rect x="533" y="606" width="1" height="12" fill="#ff0000"/>
<rect x="533" y="617" width="12" height="1" fill="#ff0000"/>
<rect x="544" y="617" width="1" height="69" fill="#ff0000"/>
<rect x="533" y="685" width="12" height="1" fill="#ff0000"/>
<rect x="523" y="685" width="10" height="1" fill="#000"/>
<rect x="398" y="606" width="1" height="80" fill="#ff0000"/>
<rect x="398" y="685" width="12" height="1" fill="#ff0000"/>
<rect x="410" y="685" width="11" height="1" fill="#000"/>
<path d="M588 277h3v1h-3zM587 278h5v3h-5zM588 281h3v1h-3z" fill="#ff0000"/>
<path d="M880 277h3v1h-3zM879 278h5v3h-5zM880 281h3v1h-3z" fill="#ff0000"/>
<path d="M374 604h3v1h-3zM373 605h5v3h-5zM374 608h3v1h-3z" fill="#ff0000"/>
<path d="M397 604h3v1h-3zM396 605h5v3h-5zM397 608h3v1h-3z" fill="#ff0000"/>
<path d="M532 604h3v1h-3zM531 605h5v3h-5zM532 608h3v1h-3z" fill="#ff0000"/>
<path d="M880 604h3v1h-3zM879 605h5v3h-5zM880 608h3v1h-3z" fill="#ff0000"/>
<path d="M454 606.5l3 -5.5l6 11l6 -11l6 11l6 -11l6 11l3 -5.5" fill="none" stroke="#000" stroke-width="1" shape-rendering="geometricPrecision"/>
<path d="M960 606.5l3 -5.5l6 11l6 -11l6 11l6 -11l6 11l3 -5.5" fill="none" stroke="#000" stroke-width="1" shape-rendering="geometricPrecision"/>
<circle cx="376.5" cy="437.5" r="22" fill="none" stroke="#000" stroke-width="1"/>
<rect x="372" y="422" width="8" height="1" fill="#000"/>
<rect x="376" y="419" width="1" height="8" fill="#000"/>
<rect x="372" y="452" width="8" height="1" fill="#000"/>
<path d="M368 436.5c1.5 -2 3.5 -3 5 -2s2.5 3 4 4.500s3 2.500 6 -1" fill="none" stroke="#000" stroke-width="1" shape-rendering="geometricPrecision"/>
<path d="M712 404.5Q719 405.5 713 408.25L709 409.9L712 412.0Q719 413.0 713 415.75L709 417.4L712 419.5Q719 420.5 713 423.25L709 424.9L712 427.0Q719 428.0 713 430.75L709 432.4L712 434.5Q719 435.5 713 438.25L709 439.9L712 442.0Q719 443.0 713 445.75L709 447.4L712 449.5" fill="none" stroke="#000" stroke-width="1" shape-rendering="geometricPrecision"/>
<path d="M737 404.5Q730 405.5 736 408.25L740 409.9L737 412.0Q730 413.0 736 415.75L740 417.4L737 419.5Q730 420.5 736 423.25L740 424.9L737 427.0Q730 428.0 736 430.75L740 432.4L737 434.5Q730 435.5 736 438.25L740 439.9L737 442.0Q730 443.0 736 445.75L740 447.4L737 449.5" fill="none" stroke="#000" stroke-width="1" shape-rendering="geometricPrecision"/>
<path d="M706 399h1v1h-1zM742 399h1v1h-1z" fill="#000"/>
<rect x="421" y="257" width="101" height="45" fill="url(#ck)"/>
<rect x="439" y="269" width="68" height="22" fill="#000"/>
<text x="443" y="285" font-size="14" fill="#00ff00" font-weight="bold">8.907m</text>
<rect x="428" y="267" width="5" height="1" fill="#00ff00"/>
<rect x="430" y="264" width="1" height="7" fill="#00ff00"/>
<rect x="512" y="266" width="5" height="1" fill="#00ff00"/>
<path d="M512 276h1v1h-1zM511 277h3v1h-3zM511 278h1v2h-1zM513 278h1v2h-1zM510 280h5v1h-5zM510 281h1v1h-1zM514 281h1v1h-1zM509 282h2v1h-2zM514 282h2v1h-2z" fill="#00ff00"/>
<rect x="972" y="257" width="101" height="45" fill="url(#ck)"/>
<rect x="991" y="269" width="67" height="22" fill="#000"/>
<text x="995.5" y="285" font-size="14" fill="#00ff00" font-weight="bold">0.044</text>
<rect x="979" y="267" width="5" height="1" fill="#00ff00"/>
<rect x="981" y="264" width="1" height="7" fill="#00ff00"/>
<rect x="1063" y="266" width="5" height="1" fill="#00ff00"/>
<path d="M1064 276h1v1h-1zM1063 277h3v1h-3zM1063 278h1v2h-1zM1065 278h1v2h-1zM1062 280h5v1h-5zM1062 281h1v1h-1zM1066 281h1v1h-1zM1061 282h2v1h-2zM1066 282h2v1h-2z" fill="#00ff00"/>
<rect x="488" y="449" width="101" height="46" fill="url(#ck)"/>
<rect x="507" y="460" width="66" height="24" fill="#000"/>
<text x="512.5" y="477" font-size="14" fill="#00ff00" font-weight="bold">137.761</text>
<rect x="495" y="458" width="5" height="1" fill="#00ff00"/>
<rect x="497" y="455" width="1" height="7" fill="#00ff00"/>
<rect x="497" y="486" width="5" height="1" fill="#00ff00"/>
<path d="M574 469h2v1h-2zM579 469h2v1h-2zM575 470h1v2h-1zM579 470h1v2h-1zM576 472h1v2h-1zM578 472h1v2h-1zM577 474h1v2h-1zM575 469h5v1h-5z" fill="#00ff00"/>
<rect x="837" y="404" width="101" height="46" fill="url(#ck)"/>
<rect x="856" y="415" width="66" height="24" fill="#000"/>
<text x="860" y="432" font-size="14" fill="#00ff00" font-weight="bold">22.219</text>
<rect x="844" y="413" width="5" height="1" fill="#00ff00"/>
<rect x="846" y="410" width="1" height="7" fill="#00ff00"/>
<rect x="845" y="441" width="5" height="1" fill="#00ff00"/>
<path d="M923 424h2v1h-2zM928 424h2v1h-2zM924 425h1v2h-1zM928 425h1v2h-1zM925 427h1v2h-1zM927 427h1v2h-1zM926 429h1v2h-1zM924 424h5v1h-5z" fill="#00ff00"/>
<rect x="421" y="662" width="101" height="45" fill="url(#ck)"/>
<rect x="439" y="674" width="65" height="23" fill="#000"/>
<text x="444" y="689.5" font-size="14" fill="#00ff00" font-weight="bold">17.800</text>
<rect x="433" y="671" width="5" height="1" fill="#00ff00"/>
<rect x="435" y="668" width="1" height="7" fill="#00ff00"/>
<rect x="510" y="669" width="5" height="1" fill="#00ff00"/>
<path d="M507 683h2v1h-2zM512 683h2v1h-2zM508 684h1v2h-1zM512 684h1v2h-1zM509 686h1v2h-1zM511 686h1v2h-1zM510 688h1v2h-1zM508 683h5v1h-5z" fill="#00ff00"/>
<text x="461" y="252.5" font-size="16" fill="#000" stroke="#000" stroke-width="0.45">U1</text>
<text x="1012" y="252.5" font-size="16" fill="#000" stroke="#000" stroke-width="0.45">U3</text>
<text x="592" y="460.5" font-size="16" fill="#000" stroke="#000" stroke-width="0.45">U2</text>
<text x="941" y="415.5" font-size="16" fill="#000" stroke="#000" stroke-width="0.45">U4</text>
<text x="462" y="657.5" font-size="16" fill="#000" stroke="#000" stroke-width="0.45">U5</text>
<text x="423" y="320" font-size="16" fill="#000" textLength="22" lengthAdjust="spacingAndGlyphs" stroke="#000" stroke-width="0.45">AC</text>
<text x="454" y="320" font-size="16" fill="#000" textLength="50" lengthAdjust="spacingAndGlyphs" stroke="#000" stroke-width="0.45">1e-009</text>
<text x="0" y="0" font-size="15.5" font-family="'DejaVu Sans',sans-serif" transform="translate(506,320) scale(0.55,1)">Ω</text>
<text x="974" y="320" font-size="16" fill="#000" textLength="22" lengthAdjust="spacingAndGlyphs" stroke="#000" stroke-width="0.45">AC</text>
<text x="1005" y="320" font-size="16" fill="#000" textLength="50" lengthAdjust="spacingAndGlyphs" stroke="#000" stroke-width="0.45">1e-009</text>
<text x="0" y="0" font-size="15.5" font-family="'DejaVu Sans',sans-serif" transform="translate(1057,320) scale(0.55,1)">Ω</text>
<text x="593" y="477" font-size="16" fill="#000" textLength="22" lengthAdjust="spacingAndGlyphs" stroke="#000" stroke-width="0.45">AC</text>
<text x="624" y="477" font-size="16" fill="#000" textLength="31" lengthAdjust="spacingAndGlyphs" stroke="#000" stroke-width="0.45">10M</text>
<text x="0" y="0" font-size="15.5" font-family="'DejaVu Sans',sans-serif" transform="translate(656,477) scale(0.55,1)">Ω</text>
<text x="941" y="432.5" font-size="16" fill="#000" textLength="22" lengthAdjust="spacingAndGlyphs" stroke="#000" stroke-width="0.45">AC</text>
<text x="972" y="432.5" font-size="16" fill="#000" textLength="31" lengthAdjust="spacingAndGlyphs" stroke="#000" stroke-width="0.45">10M</text>
<text x="0" y="0" font-size="15.5" font-family="'DejaVu Sans',sans-serif" transform="translate(1004,432.5) scale(0.55,1)">Ω</text>
<text x="434" y="725" font-size="16" fill="#000" textLength="22" lengthAdjust="spacingAndGlyphs" stroke="#000" stroke-width="0.45">AC</text>
<text x="465" y="725" font-size="16" fill="#000" textLength="31" lengthAdjust="spacingAndGlyphs" stroke="#000" stroke-width="0.45">10M</text>
<text x="0" y="0" font-size="15.5" font-family="'DejaVu Sans',sans-serif" transform="translate(497,725) scale(0.55,1)">Ω</text>
<text x="401" y="386" font-size="16" fill="#000" stroke="#000" stroke-width="0.45">V1</text>
<text x="401" y="424.5" font-size="16" fill="#000" textLength="42" lengthAdjust="spacingAndGlyphs" stroke="#000" stroke-width="0.45">220 V</text>
<text x="401" y="442.5" font-size="16" fill="#000" textLength="48" lengthAdjust="spacingAndGlyphs" stroke="#000" stroke-width="0.45">50kHz</text>
<text x="401" y="461" font-size="16" fill="#000" textLength="40" lengthAdjust="spacingAndGlyphs" stroke="#000" stroke-width="0.45">0Deg</text>
<text x="716" y="394" font-size="16" fill="#000" stroke="#000" stroke-width="0.45">T1</text>
<text x="680" y="467" font-size="16" fill="#000" textLength="48" lengthAdjust="spacingAndGlyphs" stroke="#000" stroke-width="0.45">1 sq.m</text>
<text x="741" y="467" font-size="16" fill="#000" textLength="26" lengthAdjust="spacingAndGlyphs" stroke="#000" stroke-width="0.45">1 m</text>
<text x="461" y="595" font-size="16" fill="#000" stroke="#000" stroke-width="0.45">R1</text>
<text x="451" y="629.5" font-size="16" fill="#000" textLength="17" lengthAdjust="spacingAndGlyphs" stroke="#000" stroke-width="0.45">2k</text>
<text x="0" y="0" font-size="15.5" font-family="'DejaVu Sans',sans-serif" transform="translate(469,629.5) scale(0.55,1)">Ω</text>
<text x="967" y="595" font-size="16" fill="#000" stroke="#000" stroke-width="0.45">R2</text>
<text x="957" y="629.5" font-size="16" fill="#000" textLength="30" lengthAdjust="spacingAndGlyphs" stroke="#000" stroke-width="0.45">0.5k</text>
<text x="0" y="0" font-size="15.5" font-family="'DejaVu Sans',sans-serif" transform="translate(989,629.5) scale(0.55,1)">Ω</text>
<text x="380" y="340" font-size="16" fill="#ff0000" font-weight="bold">1</text>
<text x="562" y="276" font-size="16" fill="#ff0000" font-weight="bold">3</text>
<text x="921" y="276" font-size="16" fill="#ff0000" font-weight="bold">2</text>
<text x="1098" y="441" font-size="16" fill="#ff0000" font-weight="bold">5</text>
<text x="885" y="531" font-size="16" fill="#ff0000" font-weight="bold">4</text>
<text x="421" y="602" font-size="16" fill="#ff0000" font-weight="bold">0</text>
<text x="547" y="650.5" font-size="16" fill="#ff0000" font-weight="bold">6</text>
<rect x="257" y="773" width="1183" height="7" fill="url(#tb)"/>
<rect x="257" y="780" width="1183" height="1" fill="#585858"/>
<rect x="118" y="808" width="1322" height="1" fill="#585858"/>
<rect x="118" y="851" width="1322" height="1" fill="#4a8582"/>
<rect x="260" y="781" width="1" height="19" fill="#fff"/>
<path d="M261 800h1v1h-1zM262 801h1v1h-1z" fill="#000"/>
<rect x="263" y="801" width="54" height="1" fill="#000"/>
<rect x="262" y="800" width="55" height="1" fill="#3c6c8c"/>
<rect x="318" y="781" width="1" height="19" fill="#3c5c6c"/>
<rect x="317" y="781" width="1" height="20" fill="#7aa4a4"/>
<path d="M317 800h1v1h-1z" fill="#000"/>
<path d="M264 783h11v1h-11zM264 784h1v1h-1zM274 784h2v1h-2zM264 785h1v1h-1zM268 785h3v1h-3zM274 785h1v1h-1zM276 785h1v1h-1zM264 786h1v1h-1zM268 786h1v1h-1zM271 786h1v1h-1zM274 786h1v1h-1zM277 786h1v1h-1zM264 787h1v1h-1zM268 787h1v1h-1zM271 787h1v1h-1zM274 787h1v1h-1zM278 787h1v1h-1zM264 788h1v1h-1zM268 788h1v1h-1zM271 788h1v1h-1zM274 788h6v1h-6zM264 789h1v1h-1zM268 789h3v1h-3zM279 789h1v1h-1zM264 790h1v1h-1zM279 790h1v1h-1zM264 791h1v1h-1zM279 791h1v1h-1zM264 792h1v1h-1zM267 792h1v1h-1zM270 792h1v1h-1zM279 792h1v1h-1zM264 793h1v1h-1zM268 793h1v1h-1zM270 793h1v1h-1zM279 793h1v1h-1zM264 794h1v1h-1zM268 794h3v1h-3zM279 794h1v1h-1zM264 795h1v1h-1zM269 795h2v1h-2zM279 795h1v1h-1zM264 796h1v1h-1zM268 796h1v1h-1zM270 796h1v1h-1zM279 796h1v1h-1zM264 797h1v1h-1zM279 797h1v1h-1zM264 798h16v1h-16z" fill="#000"/>
<path d="M265 784h9v1h-9zM265 785h3v1h-3zM271 785h3v1h-3zM275 785h1v1h-1zM267 786h1v1h-1zM269 786h2v1h-2zM272 786h2v1h-2zM275 786h2v1h-2zM265 787h3v1h-3zM269 787h2v1h-2zM275 787h3v1h-3zM265 788h1v1h-1zM267 788h1v1h-1zM269 788h2v1h-2zM273 788h1v1h-1zM265 789h1v1h-1zM267 789h1v1h-1zM271 789h1v1h-1zM273 789h6v1h-6zM265 790h1v1h-1zM267 790h5v1h-5zM273 790h6v1h-6zM265 791h1v1h-1zM267 791h5v1h-5zM273 791h6v1h-6zM268 792h2v1h-2zM271 792h1v1h-1zM273 792h6v1h-6zM265 793h3v1h-3zM269 793h1v1h-1zM271 793h1v1h-1zM273 793h6v1h-6zM265 794h3v1h-3zM273 794h6v1h-6zM265 795h4v1h-4zM271 795h8v1h-8zM265 796h1v1h-1zM267 796h1v1h-1zM269 796h1v1h-1zM271 796h8v1h-8zM265 797h1v1h-1zM267 797h12v1h-12z" fill="#fff"/>
<path d="M265 786h2v1h-2zM272 787h2v1h-2zM266 788h1v1h-1zM272 788h1v1h-1zM266 789h1v1h-1zM272 789h1v1h-1zM266 790h1v1h-1zM272 790h1v1h-1zM266 791h1v1h-1zM272 791h1v1h-1zM265 792h2v1h-2zM272 792h1v1h-1zM272 793h1v1h-1zM271 794h2v1h-2zM266 796h1v1h-1zM266 797h1v1h-1z" fill="#ff0000"/>
<text x="285" y="796" font-size="12" fill="#000" textLength="27" lengthAdjust="spacingAndGlyphs" stroke="#000" stroke-width="0.3">电路1</text>
<rect x="320" y="780" width="87" height="23" fill="url(#tb)"/>
<rect x="320" y="781" width="1" height="21" fill="#909090"/>
<path d="M321 802h1v1h-1zM322 803h1v1h-1z" fill="#000"/>
<rect x="323" y="803" width="83" height="1" fill="#000"/>
<rect x="322" y="802" width="84" height="1" fill="#5c8c8c"/>
<rect x="407" y="781" width="1" height="21" fill="#3c5c6c"/>
<rect x="406" y="781" width="1" height="22" fill="#7aa4a4"/>
<path d="M406 802h1v1h-1z" fill="#000"/>
<path d="M323 784h11v1h-11zM323 785h1v1h-1zM333 785h2v1h-2zM323 786h1v1h-1zM327 786h3v1h-3zM333 786h1v1h-1zM335 786h1v1h-1zM323 787h1v1h-1zM327 787h1v1h-1zM330 787h1v1h-1zM333 787h1v1h-1zM336 787h1v1h-1zM323 788h1v1h-1zM327 788h1v1h-1zM330 788h1v1h-1zM333 788h1v1h-1zM337 788h1v1h-1zM323 789h1v1h-1zM327 789h1v1h-1zM330 789h1v1h-1zM333 789h6v1h-6zM323 790h1v1h-1zM327 790h3v1h-3zM338 790h1v1h-1zM323 791h1v1h-1zM338 791h1v1h-1zM323 792h1v1h-1zM338 792h1v1h-1zM323 793h1v1h-1zM326 793h1v1h-1zM329 793h1v1h-1zM338 793h1v1h-1zM323 794h1v1h-1zM327 794h1v1h-1zM329 794h1v1h-1zM338 794h1v1h-1zM323 795h1v1h-1zM327 795h3v1h-3zM338 795h1v1h-1zM323 796h1v1h-1zM328 796h2v1h-2zM338 796h1v1h-1zM323 797h1v1h-1zM327 797h1v1h-1zM329 797h1v1h-1zM338 797h1v1h-1zM323 798h1v1h-1zM338 798h1v1h-1zM323 799h16v1h-16z" fill="#000"/>
<path d="M324 785h9v1h-9zM324 786h3v1h-3zM330 786h3v1h-3zM334 786h1v1h-1zM326 787h1v1h-1zM328 787h2v1h-2zM331 787h2v1h-2zM334 787h2v1h-2zM324 788h3v1h-3zM328 788h2v1h-2zM334 788h3v1h-3zM324 789h1v1h-1zM326 789h1v1h-1zM328 789h2v1h-2zM332 789h1v1h-1zM324 790h1v1h-1zM326 790h1v1h-1zM330 790h1v1h-1zM332 790h6v1h-6zM324 791h1v1h-1zM326 791h5v1h-5zM332 791h6v1h-6zM324 792h1v1h-1zM326 792h5v1h-5zM332 792h6v1h-6zM327 793h2v1h-2zM330 793h1v1h-1zM332 793h6v1h-6zM324 794h3v1h-3zM328 794h1v1h-1zM330 794h1v1h-1zM332 794h6v1h-6zM324 795h3v1h-3zM332 795h6v1h-6zM324 796h4v1h-4zM330 796h8v1h-8zM324 797h1v1h-1zM326 797h1v1h-1zM328 797h1v1h-1zM330 797h8v1h-8zM324 798h1v1h-1zM326 798h12v1h-12z" fill="#fff"/>
<path d="M324 787h2v1h-2zM331 788h2v1h-2zM325 789h1v1h-1zM331 789h1v1h-1zM325 790h1v1h-1zM331 790h1v1h-1zM325 791h1v1h-1zM331 791h1v1h-1zM325 792h1v1h-1zM331 792h1v1h-1zM324 793h2v1h-2zM331 793h1v1h-1zM331 794h1v1h-1zM330 795h2v1h-2zM325 797h1v1h-1zM325 798h1v1h-1z" fill="#ff0000"/>
<text x="343" y="797" font-size="12" fill="#000" textLength="59" lengthAdjust="spacingAndGlyphs" stroke="#000" stroke-width="0.3">变压器试验</text>
<rect x="121" y="811" width="13" height="1" fill="#fff"/>
<rect x="121" y="811" width="1" height="13" fill="#fff"/>
<rect x="121" y="823" width="13" height="1" fill="#4a6c6c"/>
<rect x="133" y="811" width="1" height="13" fill="#4a6c6c"/>
<rect x="122" y="822" width="11" height="1" fill="#7aa4a4"/>
<rect x="132" y="812" width="1" height="11" fill="#7aa4a4"/>
<rect x="121" y="828" width="13" height="1" fill="#fff"/>
<rect x="121" y="828" width="1" height="13" fill="#fff"/>
<rect x="121" y="840" width="13" height="1" fill="#4a6c6c"/>
<rect x="133" y="828" width="1" height="13" fill="#4a6c6c"/>
<rect x="122" y="839" width="11" height="1" fill="#7aa4a4"/>
<rect x="132" y="829" width="1" height="11" fill="#7aa4a4"/>
<path d="M124 814h2v1h-2zM129 814h2v1h-2zM125 815h2v1h-2zM128 815h2v1h-2zM126 816h3v1h-3zM126 817h3v1h-3zM125 818h2v1h-2zM128 818h2v1h-2zM124 819h2v1h-2zM129 819h2v1h-2z" fill="#000"/>
<path d="M125 831l4 3l-4 3z" fill="#5c8c8c"/>
<rect x="121" y="844" width="14" height="1" fill="#b0c0e0"/>
<rect x="145" y="824" width="1" height="16" fill="#fff"/>
<rect x="188" y="824" width="1" height="16" fill="#4a6c6c"/>
<rect x="187" y="824" width="1" height="16" fill="#8cb0b0"/>
<rect x="146" y="840" width="42" height="1" fill="#4a6c6c"/>
<rect x="146" y="839" width="41" height="1" fill="#8cb0b0"/>
<text x="151" y="837" font-size="12" fill="#000" textLength="24" lengthAdjust="spacingAndGlyphs" stroke="#000" stroke-width="0.3">结果</text>
<text x="120" y="867" font-size="12" fill="#000" textLength="46" lengthAdjust="spacingAndGlyphs" stroke="#000" stroke-width="0.3">按F1显示</text>
<rect x="162" y="853" width="78" height="18" fill="#ffffe1"/>
<rect x="162" y="853" width="78" height="1" fill="#000"/>
<rect x="162" y="870" width="78" height="1" fill="#000"/>
<rect x="162" y="853" width="1" height="18" fill="#000"/>
<rect x="239" y="853" width="1" height="18" fill="#000"/>
<rect x="164" y="871" width="77" height="1" fill="#707070"/>
<rect x="240" y="855" width="1" height="17" fill="#707070"/>
<text x="165.5" y="866.5" font-size="12" fill="#000050" textLength="71" lengthAdjust="spacingAndGlyphs">单击这里开始</text>
<rect x="1132" y="855" width="86" height="1" fill="#4a8582"/>
<rect x="1132" y="855" width="1" height="16" fill="#4a8582"/>
<rect x="1217" y="855" width="1" height="16" fill="#fff"/>
<rect x="1220" y="855" width="136" height="1" fill="#4a8582"/>
<rect x="1220" y="855" width="1" height="16" fill="#4a8582"/>
<rect x="1355" y="855" width="1" height="16" fill="#fff"/>
<rect x="1358" y="855" width="88" height="1" fill="#4a8582"/>
<rect x="1358" y="855" width="1" height="16" fill="#4a8582"/>
<rect x="1445" y="855" width="1" height="16" fill="#fff"/>
<text x="1134" y="867" font-size="12" fill="#000" stroke="#000" stroke-width="0.3">-</text>
<text x="1223" y="867" font-size="12" fill="#000" textLength="88" lengthAdjust="spacingAndGlyphs" stroke="#000" stroke-width="0.3">传递函数: 0.080 s</text>
<text x="1361" y="867" font-size="12" fill="#000" textLength="92" lengthAdjust="spacingAndGlyphs" stroke="#000" stroke-width="0.3">变压器试验: 正在</text>
<rect x="118" y="871" width="1322" height="29" fill="url(#tsk)"/>
<rect x="597" y="874" width="160" height="26" fill="#2c8c84"/>
<rect x="597" y="885" width="160" height="15" fill="#1c6c68"/>
<rect x="597" y="874" width="1" height="26" fill="#186058"/>
<rect x="756" y="874" width="1" height="26" fill="#186058"/>
<clipPath id="tkc"><rect x="118" y="871" width="1322" height="29"/></clipPath>
<g shape-rendering="geometricPrecision" clip-path="url(#tkc)"><circle cx="148.500" cy="888.500" r="18.500" fill="#043838"/><circle cx="148.500" cy="888.500" r="16.500" fill="#1a64a8" stroke="#4cb4dc" stroke-width="1.400"/><ellipse cx="148.500" cy="881" rx="12.500" ry="6.500" fill="#4ca8d8" opacity="0.650"/><path d="M140.500 878.500q4 -2.500 8 -0.500l-1.800 7.500q-4 -2 -8 0.500z" fill="#e8683c"/><path d="M150 878.500q4 2 8 -0.500l-1.800 8q-4 2.500 -8 0z" fill="#78c440"/><path d="M138.200 887.500q4 -2.500 8 -0.500l-1.800 7.500q-4 -2 -8 0.500z" fill="#38b4e0"/><path d="M147.700 887.500q4 2 8 -0.500l-1.800 8q-4 2.500 -8 0z" fill="#f0c438"/></g>
<g shape-rendering="geometricPrecision"><path d="M201.5 888.5A6 6 0 1 1 202 886" fill="none" stroke="#2084e4" stroke-width="3.6"/><rect x="193" y="885" width="9" height="2.200" fill="#2890e8"/><ellipse cx="196" cy="885.5" rx="9.500" ry="3.600" fill="none" stroke="#e8b020" stroke-width="1.600" transform="rotate(-38 196 885.5)"/></g>
<g shape-rendering="geometricPrecision"><path d="M301.5 888.5A6 6 0 1 1 302 886" fill="none" stroke="#2084e4" stroke-width="3.6"/><rect x="293" y="885" width="9" height="2.200" fill="#2890e8"/><ellipse cx="296" cy="885.5" rx="9.500" ry="3.600" fill="none" stroke="#e8b020" stroke-width="1.600" transform="rotate(-38 296 885.5)"/></g>
<g shape-rendering="geometricPrecision"><rect x="212" y="879" width="13" height="14" rx="2" fill="#e8f0f8" stroke="#2060c0" stroke-width="1.500"/><circle cx="218.500" cy="886" r="3.500" fill="none" stroke="#2060c0" stroke-width="1.500"/><path d="M221 878l4 3" stroke="#e03020" stroke-width="2"/></g>
<g shape-rendering="geometricPrecision"><path d="M235 884l7 -5l8 4l-7 5z" fill="#f8d040"/><path d="M235 884l8 4v7l-8 -4z" fill="#e07818"/><path d="M243 888l7 -5v7l-7 5z" fill="#f09828"/><path d="M240 881l4 2" stroke="#c03010" stroke-width="1.500"/></g>
<path d="M263 883l3 3l-3 3" fill="none" stroke="#e0f0f0" stroke-width="1.4" shape-rendering="geometricPrecision"/>
<text x="307" y="891" font-size="12" fill="#fff" textLength="118" lengthAdjust="spacingAndGlyphs">综合讨论 - 工控人家...</text>
<g shape-rendering="geometricPrecision"><path d="M448 880h5l1.500 2h7.500v10h-14z" fill="#f8e080" stroke="#c89820" stroke-width="1"/><path d="M448 884h14v8h-14z" fill="#fcd860"/></g>
<text x="466" y="891" font-size="12" fill="#fff" textLength="33" lengthAdjust="spacingAndGlyphs">EWB9</text>
<path d="M614 879h2v1h-2zM612 880h5v1h-5zM610 881h4v1h-4zM616 881h6v1h-6zM610 882h2v1h-2zM614 882h4v1h-4zM620 882h4v1h-4zM609 883h1v1h-1zM611 883h3v1h-3zM615 883h2v1h-2zM619 883h3v1h-3zM607 884h2v1h-2zM611 884h1v1h-1zM613 884h3v1h-3zM617 884h3v1h-3zM609 885h2v1h-2zM612 885h1v1h-1zM614 885h1v1h-1zM616 885h3v1h-3zM611 886h1v1h-1zM613 886h1v1h-1zM615 886h2v1h-2zM613 887h3v1h-3zM614 888h1v1h-1z" fill="#0000a0"/>
<path d="M618 880h1v1h-1zM614 881h2v1h-2zM612 882h2v1h-2zM614 883h1v1h-1zM612 884h1v1h-1zM616 884h1v1h-1zM611 885h1v1h-1zM613 885h1v1h-1zM615 885h1v1h-1zM612 886h1v1h-1zM614 886h1v1h-1z" fill="#fff"/>
<path d="M608 882h2v1h-2zM618 882h2v1h-2zM607 883h2v1h-2zM610 883h1v1h-1zM617 883h2v1h-2zM609 884h2v1h-2z" fill="#ffff00"/>
<path d="M608 886h3v1h-3zM617 886h4v1h-4zM609 887h4v1h-4zM616 887h4v1h-4zM611 888h3v1h-3zM615 888h3v1h-3zM613 889h3v1h-3z" fill="#e0d8d8"/>
<text x="627" y="891" font-size="12" fill="#fff" textLength="117" lengthAdjust="spacingAndGlyphs">变压器试验 - Multisi...</text>
<g shape-rendering="geometricPrecision"><path d="M770 880l3 12h5l3 -12z" fill="#c8b8a0" stroke="#806040" stroke-width="0.800"/><path d="M771 878l3 8" stroke="#e03030" stroke-width="1.600"/><path d="M775.500 877v9" stroke="#30a040" stroke-width="1.600"/><path d="M780 878l-3 8" stroke="#3050e0" stroke-width="1.600"/></g>
<text x="786" y="891" font-size="12" fill="#fff" textLength="108" lengthAdjust="spacingAndGlyphs">变压器1.bmp - 画图</text>
<g shape-rendering="geometricPrecision"><rect x="1396.500" y="884.500" width="15" height="8" fill="#e8e8e8" stroke="#404040" stroke-width="1"/><path d="M1398 887h12M1398 890h12" stroke="#606060" stroke-width="1" stroke-dasharray="1 1"/><path d="M1398 882h11" stroke="#e8e8e8" stroke-dasharray="1 1"/><path d="M1423 893l6 -8" stroke="#d0d0d0" stroke-width="2"/><circle cx="1430" cy="883" r="3" fill="#c0c0c0" stroke="#505050" stroke-width="0.800"/></g></svg></body></html>
